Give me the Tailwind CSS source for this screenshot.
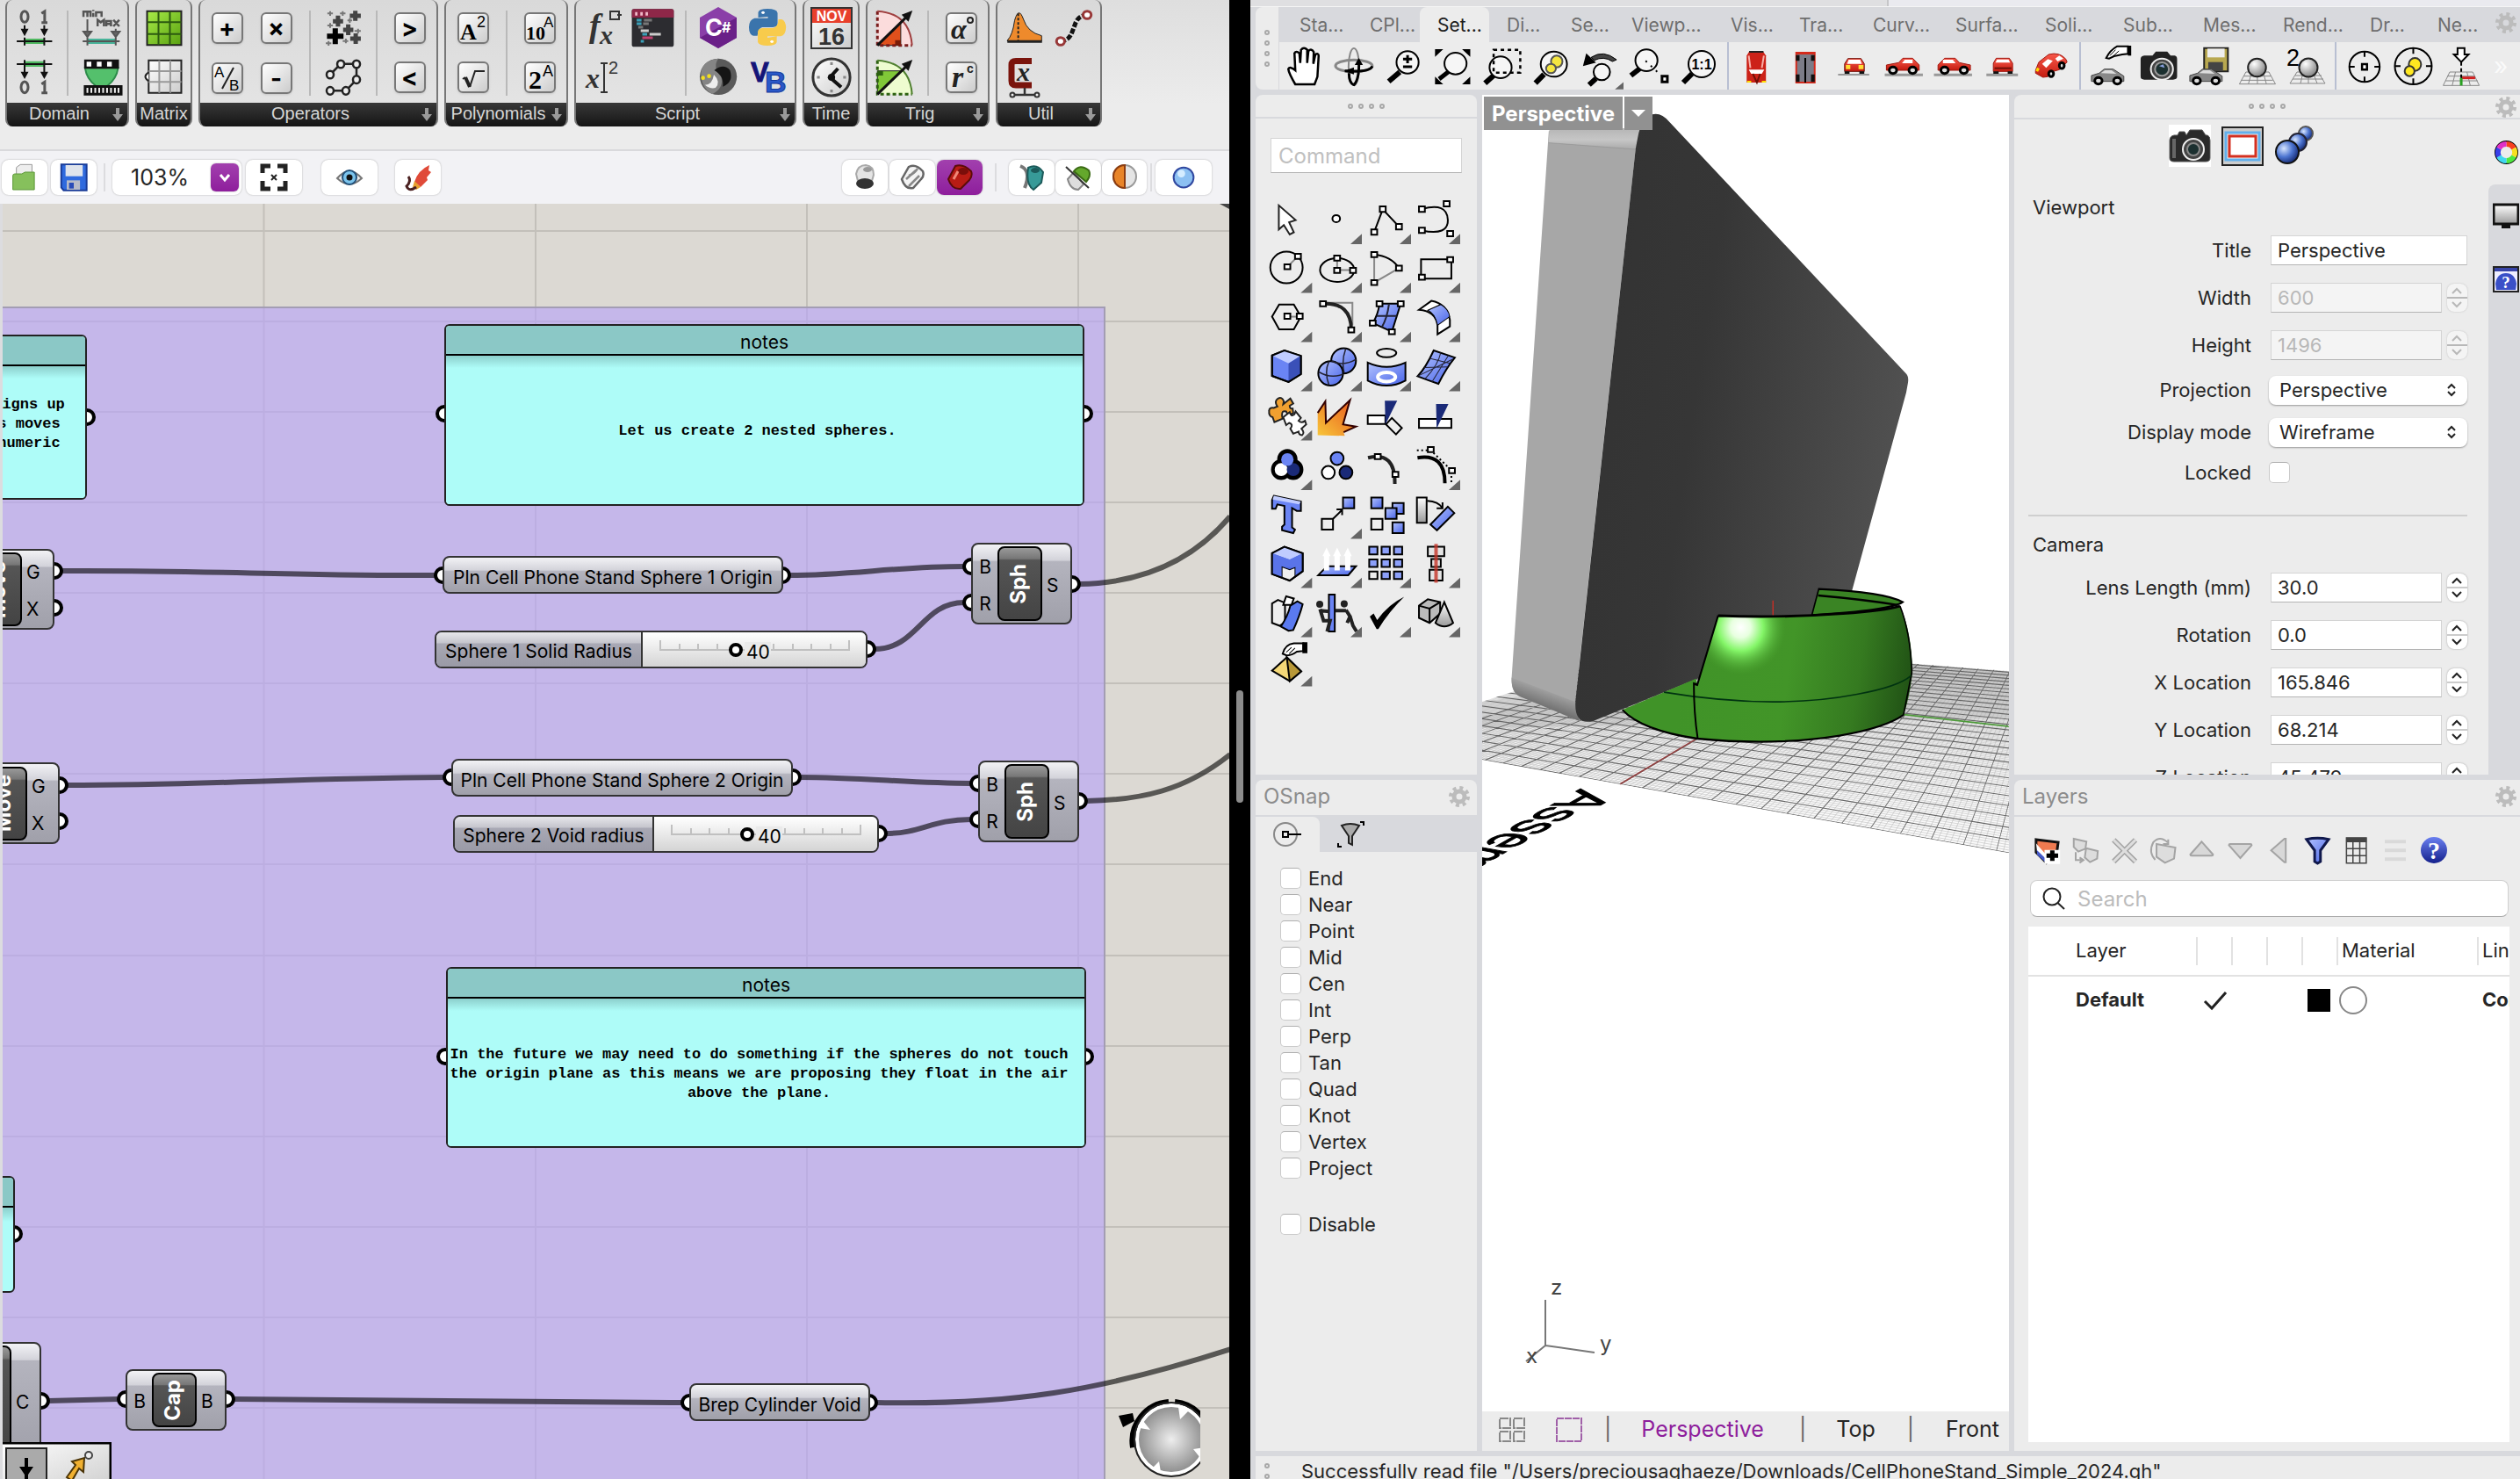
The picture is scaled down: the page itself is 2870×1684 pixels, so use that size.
<!DOCTYPE html>
<html lang="en">
<head>
<meta charset="utf-8">
<title>Grasshopper and Rhino workspace</title>
<script src="https://cdn.jsdelivr.net/npm/@tailwindcss/browser@4"></script>
</head>
<body class="bg-black font-['Inter',sans-serif] text-[#262626]">
<svg width="0" height="0" class="absolute">
  <defs>
    <path id="corner" d="M-39 0L0-29V0z" fill="#666"/>
    <path id="drop" d="M5 0h4v7h4l-6 8-6-8h4z" fill="#9a9a9a"/>
    <g id="gear" fill="none" stroke="#bcbcbc"><circle cx="12" cy="12" r="6" stroke-width="5"/><circle cx="12" cy="12" r="10" stroke-width="4" stroke-dasharray="3.93 3.93"/></g>
    <linearGradient id="blue" x1="0" y1="0" x2="1" y2="1"><stop offset="0" stop-color="#b4c4ff"/><stop offset="1" stop-color="#4763e8"/></linearGradient>
    <linearGradient id="gray" x1="0" y1="0" x2="0" y2="1"><stop offset="0" stop-color="#fff"/><stop offset="1" stop-color="#999"/></linearGradient>
    <linearGradient id="silver" x1="0" y1="0" x2="1" y2="1"><stop offset="0" stop-color="#fff"/><stop offset="1" stop-color="#ccc"/></linearGradient>
    <linearGradient id="fire" x1="0" y1="1" x2="1" y2="0"><stop offset="0" stop-color="#f8c63a"/><stop offset="1" stop-color="#e8541c"/></linearGradient>
    <linearGradient id="red" x1="0" y1="0" x2="0" y2="1"><stop offset="0" stop-color="#f8584a"/><stop offset="1" stop-color="#c41c10"/></linearGradient>
    <linearGradient id="lime" x1="0" y1="0" x2="1" y2="1"><stop offset="0" stop-color="#a8ec48"/><stop offset="1" stop-color="#58a010"/></linearGradient>
    <radialGradient id="ball" cx=".35" cy=".3" r=".8"><stop offset="0" stop-color="#fff"/><stop offset="1" stop-color="#777"/></radialGradient>
    <radialGradient id="blueball" cx=".35" cy=".35" r=".75"><stop offset="0" stop-color="#d8e6ff"/><stop offset=".5" stop-color="#4c74d0"/><stop offset="1" stop-color="#0c1c60"/></radialGradient>
    <linearGradient id="help" x1="0" y1="0" x2="0" y2="1"><stop offset="0" stop-color="#6a80f0"/><stop offset="1" stop-color="#14208c"/></linearGradient>
  </defs>
</svg>

<div class="grid h-screen grid-cols-[1400fr_24px_1446fr] overflow-hidden">

<!-- Grasshopper -->
<section class="flex min-w-0 flex-col overflow-hidden bg-[#ececec]">
  <div class="flex h-[172px] shrink-0 items-start gap-[7px] border-b-2 border-[#d9d9dc] bg-[linear-gradient(#dedede,#ececec_70%)] pl-[6px] [&_svg]:size-14 [&_svg]:overflow-visible [&_svg_*]:[vector-effect:non-scaling-stroke]">

    <div class="flex h-36 w-[141px] flex-col overflow-hidden rounded-lg border-x-2 border-[#777] bg-[linear-gradient(#d9d9d9,#e6e6e6)]">
      <div class="flex h-[117px] justify-center pt-1">
        <div>
          <svg viewBox="22 12 125 168" preserveAspectRatio="none" fill="none" stroke="#111" stroke-width="2"><path d="M60 132H110V150H60z" fill="#4fb860" stroke="none"/><path d="M40 141H130M60 128V155M110 128V155M60 86V116M110 86V116"/><path d="M50 98H70L60 124zM100 98H120L110 124z" fill="#111" stroke="none"/><ellipse cx="60" cy="57" rx="9" ry="19" stroke="#555" stroke-width="3"/><path d="M103 46L111 39V77M103 77H118" stroke="#555" stroke-width="3"/></svg>
          <svg viewBox="22 180 125 168" preserveAspectRatio="none" fill="none" stroke="#111" stroke-width="2"><path d="M60 209H110V228H60z" fill="#4fb860" stroke="none"/><path d="M40 219H130M60 205V250M110 205V250"/><path d="M50 245H70L60 270zM100 245H120L110 270z" fill="#111" stroke="none"/><ellipse cx="60" cy="298" rx="9" ry="19" stroke="#555" stroke-width="3"/><path d="M103 287L111 280V317M103 317H118" stroke="#555" stroke-width="3"/></svg>
        </div>
        <div class="mx-[9px] my-2 w-[2px] bg-[#b9b9b9]"></div>
        <div>
          <svg viewBox="190 12 125 168" preserveAspectRatio="none" fill="none" stroke="#555" stroke-width="2"><path d="M218 132H290V150H218z" fill="#48b49a" stroke="none"/><path d="M206 141H300M218 128V155M290 128V155M218 66V112M290 98V112"/><path d="M208 108H228L218 126zM280 108H300L290 126z" fill="#666"/><path d="M208 58V40H218V58M218 40H226V58M233 44V58M233 34V38M240 58V42H254V58" stroke-width="2.500"/><path d="M244 90V68L252 76L260 68V90M266 90V72H278V90M266 82H278M284 68L299 90M299 68L284 90" stroke-width="2.500"/></svg>
          <svg viewBox="190 180 125 168" preserveAspectRatio="none" stroke="#111" stroke-width="2"><path d="M212 232H296Q292 270 268 294H240Q216 270 212 232z" fill="#54c06c" stroke="#2d8c4a"/><path d="M212 206H296V232H212z" fill="#111"/><path d="M216 211H228V227H216zM242 211H254V227H242zM268 211H280V227H268z" fill="#fff" stroke="none"/><path d="M211 294H305V323H211z" fill="#111"/><path d="M218 300V317M228 300V317M238 300V317M248 300V317M258 300V317M268 300V317M278 300V317M288 300V317M297 300V317" stroke="#eee"/></svg>
        </div>
      </div>
      <div class="flex h-[27px] items-center bg-[linear-gradient(#383838,#151515)] pr-1 font-['Liberation_Sans',sans-serif] text-[20px] leading-[22px] text-[#d6d6d6]"><span class="flex-1 pb-1 text-center">Domain</span><svg class="!h-[15px] !w-[14px]" viewBox="0 0 14 15"><use href="#drop"/></svg></div>
    </div>

    <div class="flex h-36 w-[65px] flex-col overflow-hidden rounded-lg border-x-2 border-[#777] bg-[linear-gradient(#d9d9d9,#e6e6e6)]">
      <div class="flex h-[117px] justify-center pt-1"><div>
          <svg viewBox="354 12 125 168" preserveAspectRatio="none"><path d="M373 38H460V154H373z" fill="url(#lime)" stroke="#222" stroke-width="2"/><path d="M402 38V154M431 38V154M373 76H460M373 116H460" stroke="#2c5a10" stroke-width="2"/></svg>
          <svg viewBox="354 180 125 168" preserveAspectRatio="none"><path d="M377 206H460V317H377z" fill="url(#silver)" stroke="#222" stroke-width="2"/><path d="M404 206V317M432 206V317M377 243H460M377 280H460" stroke="#999" stroke-width="2"/><path d="M377 247Q360 262 377 277" fill="#fff" stroke="#222" stroke-width="2"/></svg>
      </div></div>
      <div class="flex h-[27px] items-center justify-center bg-[linear-gradient(#383838,#151515)] pb-1 font-['Liberation_Sans',sans-serif] text-[20px] leading-[22px] text-[#d6d6d6]">Matrix</div>
    </div>

    <div class="flex h-36 w-[273px] flex-col overflow-hidden rounded-lg border-x-2 border-[#777] bg-[linear-gradient(#d9d9d9,#e6e6e6)]">
      <div class="flex h-[117px] justify-center pt-1">
        <div class="grid grid-cols-2 place-items-center [&>span]:m-[10px] [&>span]:flex [&>span]:size-9 [&>span]:items-center [&>span]:justify-center [&>span]:rounded-md [&>span]:border-2 [&>span]:border-[#777] [&>span]:bg-[linear-gradient(135deg,#fff,#ccc)] [&>span]:text-[28px] [&>span]:font-bold [&>span]:text-black [&>span]:shadow">
          <span>+</span><span>×</span><span><svg class="!size-8 shrink-0" viewBox="0 0 32 32"><text x="1" y="15" font-size="17" font-family="Liberation Sans" font-weight="normal">A</text><text x="18" y="30" font-size="17" font-family="Liberation Sans" font-weight="normal">B</text><path d="M23 4L10 28" stroke="#222" stroke-width="2"/></svg></span><span>-</span>
        </div>
        <div class="mx-[9px] my-2 w-[2px] bg-[#b9b9b9]"></div>
        <div>
          <svg viewBox="811 12 125 168" preserveAspectRatio="none" stroke="#333" fill="none"><path d="M832 124H874M853 97V151" stroke="#000" stroke-width="6"/><path d="M847 73H873M860 53V91M890 54H918M904 37V71M873 102H899M886 83V120M891 132H918M905 114V150" stroke="#444" stroke-width="5"/><path d="M833 46H847M840 38V54M865 46H879M872 38V54M833 87H847M840 79V95M902 106H918M911 98V114M872 140H886M880 132V148M829 148H843M836 140V156M884 70H896M890 62V78" stroke="#777" stroke-width="2"/></svg>
          <svg viewBox="811 180 125 168" preserveAspectRatio="none" stroke="#222" stroke-width="2.500" fill="#eee"><path d="M867 218H907L907 272L880 310H840M840 255L867 218" fill="none"/><ellipse cx="867" cy="219" rx="9" ry="13"/><ellipse cx="907" cy="219" rx="9" ry="13"/><ellipse cx="907" cy="272" rx="9" ry="13"/><ellipse cx="880" cy="310" rx="9" ry="13"/><ellipse cx="840" cy="310" rx="9" ry="13"/><ellipse cx="840" cy="255" rx="9" ry="13"/></svg>
        </div>
        <div class="mx-[9px] my-2 w-[2px] bg-[#b9b9b9]"></div>
        <div class="[&>span]:m-[10px] [&>span]:mb-5 [&>span]:flex [&>span]:size-9 [&>span]:items-center [&>span]:justify-center [&>span]:rounded-md [&>span]:border-2 [&>span]:border-[#777] [&>span]:bg-[linear-gradient(135deg,#fff,#ccc)] [&>span]:text-[28px] [&>span]:font-bold [&>span]:text-black [&>span]:shadow"><span>&gt;</span><span>&lt;</span></div>
      </div>
      <div class="flex h-[27px] items-center bg-[linear-gradient(#383838,#151515)] pr-1 font-['Liberation_Sans',sans-serif] text-[20px] leading-[22px] text-[#d6d6d6]"><span class="flex-1 pb-1 text-center">Operators</span><svg class="!h-[15px] !w-[14px]" viewBox="0 0 14 15"><use href="#drop"/></svg></div>
    </div>

    <div class="flex h-36 w-[141px] flex-col overflow-hidden rounded-lg border-x-2 border-[#777] bg-[linear-gradient(#d9d9d9,#e6e6e6)]">
      <div class="flex h-[117px] justify-center pt-1 [&_span]:m-[10px] [&_span]:mb-5 [&_span]:flex [&_span]:size-9 [&_span]:items-center [&_span]:justify-center [&_span]:rounded-md [&_span]:border-2 [&_span]:border-[#777] [&_span]:bg-[linear-gradient(135deg,#fff,#ccc)] [&_span]:text-[#222] [&_span]:shadow [&_svg]:shrink-0">
        <div><span><svg class="!size-8" viewBox="0 0 32 32"><text x="1" y="29" font-size="26" font-weight="bold" font-family="Liberation Serif">A</text><text x="20" y="15" font-size="18" font-family="Liberation Sans">2</text></svg></span><span><svg class="!size-8" viewBox="0 0 32 32" fill="none" stroke="#222"><path d="M4 18l3-2" stroke-width="2"/><path d="M7 16l5 11" stroke-width="4"/><path d="M12 27L18 9H29" stroke-width="2"/></svg></span></div>
        <div class="mx-[9px] my-2 w-[2px] bg-[#b9b9b9]"></div>
        <div><span><svg class="!size-8" viewBox="0 0 32 32"><text x="0" y="29" font-size="22" font-weight="bold" font-family="Liberation Serif">10</text><text x="20" y="15" font-size="17" font-family="Liberation Sans">A</text></svg></span><span><svg class="!size-8" viewBox="0 0 32 32"><text x="3" y="29" font-size="30" font-weight="bold" font-family="Liberation Serif">2</text><text x="19" y="15" font-size="18" font-family="Liberation Sans">A</text></svg></span></div>
      </div>
      <div class="flex h-[27px] items-center bg-[linear-gradient(#383838,#151515)] pr-1 font-['Liberation_Sans',sans-serif] text-[20px] leading-[22px] text-[#d6d6d6]"><span class="flex-1 pb-1 text-center">Polynomials</span><svg class="!h-[15px] !w-[14px]" viewBox="0 0 14 15"><use href="#drop"/></svg></div>
    </div>

    <div class="flex h-36 w-[253px] flex-col overflow-hidden rounded-lg border-x-2 border-[#777] bg-[linear-gradient(#d9d9d9,#e6e6e6)]">
      <div class="flex h-[117px] justify-center pt-1">
        <div>
          <svg viewBox="0 0 56 56"><text x="12" y="38" font-family="Liberation Serif" font-style="italic" font-weight="bold" font-size="38" fill="#333">f</text><text x="24" y="46" font-family="Liberation Serif" font-style="italic" font-weight="bold" font-size="30" fill="#333">x</text><path d="M36 9h10v9h-10zM44 13h5" fill="none" stroke="#333" stroke-width="2"/></svg>
          <svg viewBox="0 0 56 56"><text x="8" y="40" font-family="Liberation Serif" font-style="italic" font-weight="bold" font-size="32" fill="#333">x</text><path d="M25 12h8M29 12v33M25 45h8" stroke="#333" stroke-width="2"/><text x="34" y="24" font-family="Liberation Sans" font-size="20" fill="#333">2</text></svg>
        </div>
        <div>
          <svg viewBox="30 12 122 168" preserveAspectRatio="none"><path d="M40 38Q40 31 46 31H138Q144 31 144 38V153Q144 160 138 160H46Q40 160 40 153z" fill="#2c2c30"/><path d="M40 60V38Q40 31 46 31H138Q144 31 144 38V60z" fill="#8e2748"/><path d="M48 47H54M61 47H67M74 47H80" stroke="#f0b8c8" stroke-width="4"/><path d="M52 69H64M52 81H64M66 117H78M62 141H70" stroke="#3aa0b8" stroke-width="3"/><path d="M70 69H90M68 81H82M56 93H68" stroke="#777" stroke-width="3"/><path d="M62 105H82M84 117H112" stroke="#ccc" stroke-width="3"/><path d="M66 129H92" stroke="#c04070" stroke-width="3"/></svg>
        </div>
        <div class="mx-[9px] my-2 w-[2px] bg-[#b9b9b9]"></div>
        <div>
          <svg viewBox="0 0 56 56"><path d="M27 4L48 16V39L27 51L6 39V16z" fill="#8a3fa8"/><path d="M48 16V39L27 51L6 39z" fill="#6a2088"/><text x="12" y="37" font-size="27" font-family="Inter" font-weight="bold" fill="#fff">C</text><text x="31" y="33" font-size="16" font-family="Inter" font-weight="bold" fill="#fff">#</text></svg>
          <svg viewBox="196 180 122 168" preserveAspectRatio="none"><ellipse cx="255" cy="262" rx="46" ry="62" fill="#5a5a5a"/><path d="M212 250Q215 205 255 200Q240 230 262 262Q270 300 240 322Q212 300 212 250" fill="#858585"/><path d="M245 240Q268 215 284 240Q294 280 266 296Q270 260 245 240" fill="#151515"/><path d="M222 290Q240 290 244 255Q262 280 248 300Q235 305 222 290" fill="#eee"/><ellipse cx="217" cy="266" rx="5" ry="7" fill="#f2de20"/><ellipse cx="232" cy="260" rx="5" ry="7" fill="#f2de20"/></svg>
        </div>
        <div>
          <svg viewBox="318 12 122 168" preserveAspectRatio="none"><path d="M354 60V42Q356 30 377 30Q400 30 402 44V82Q402 92 390 93H364Q354 96 352 122H342Q331 118 331 92Q332 66 345 62H378V57z" fill="#3a74ac"/><path d="M400 124V144Q398 156 377 156Q356 156 353 144V108Q354 98 364 96H390Q404 92 404 66H412Q422 70 423 94Q422 122 410 124H377V129z" fill="#f8cb4c"/><ellipse cx="366" cy="43" rx="4" ry="5" fill="#fff"/><ellipse cx="388" cy="142" rx="4" ry="5" fill="#fff"/></svg>
          <svg viewBox="0 0 56 56"><text x="8" y="33" font-size="31" font-family="Liberation Sans" font-weight="bold" fill="#141478" stroke="#141478">V</text><text x="24" y="45" font-size="34" font-family="Liberation Sans" font-weight="bold" fill="#2a58c8" stroke="#14389a">B</text></svg>
        </div>
      </div>
      <div class="flex h-[27px] items-center bg-[linear-gradient(#383838,#151515)] pr-1 font-['Liberation_Sans',sans-serif] text-[20px] leading-[22px] text-[#d6d6d6]"><span class="flex-1 pb-1 text-center">Script</span><svg class="!h-[15px] !w-[14px]" viewBox="0 0 14 15"><use href="#drop"/></svg></div>
    </div>

    <div class="flex h-36 w-[65px] flex-col overflow-hidden rounded-lg border-x-2 border-[#777] bg-[linear-gradient(#d9d9d9,#e6e6e6)]">
      <div class="flex h-[117px] justify-center pt-1"><div>
          <svg viewBox="0 0 56 56"><path d="M5 5h46v46h-46z" fill="url(#silver)"/><path d="M5 5h46v17h-46z" fill="#e8402c"/><path d="M5 5h46v46h-46z" fill="none" stroke="#333" stroke-width="2"/><text x="28" y="20" font-size="16" font-weight="bold" text-anchor="middle" font-family="Liberation Sans" fill="#fff">NOV</text><text x="28" y="47" font-size="27" font-weight="bold" text-anchor="middle" font-family="Liberation Sans" fill="#333">16</text></svg>
          <svg viewBox="475 180 122 168" preserveAspectRatio="none"><ellipse cx="536" cy="264" rx="46" ry="63" fill="url(#silver)" stroke="#333" stroke-width="3"/><path d="M536 212V222M536 306V316M500 264H507M565 264H572" stroke="#888" stroke-width="3"/><path d="M552 234L532 264L560 298" fill="none" stroke="#111" stroke-width="4"/><ellipse cx="536" cy="264" rx="9" ry="12" fill="#111"/></svg>
      </div></div>
      <div class="flex h-[27px] items-center justify-center bg-[linear-gradient(#383838,#151515)] pb-1 font-['Liberation_Sans',sans-serif] text-[20px] leading-[22px] text-[#d6d6d6]">Time</div>
    </div>

    <div class="flex h-36 w-[141px] flex-col overflow-hidden rounded-lg border-x-2 border-[#777] bg-[linear-gradient(#d9d9d9,#e6e6e6)]">
      <div class="flex h-[117px] justify-center pt-1">
        <div>
          <svg viewBox="632 12 122 168" preserveAspectRatio="none"><path d="M650 38Q730 45 736 155H650z" fill="#fbdcdc"/><path d="M650 155L708 80V155z" fill="#e0501c" stroke="#222" stroke-width="1"/><path d="M650 38V155H736" fill="none" stroke="#7a1c1c" stroke-width="3" stroke-dasharray="4 3"/><path d="M650 38Q730 45 736 155" fill="none" stroke="#a04040" stroke-width="2"/><path d="M694 137H708V155H694z" fill="#7a1c08"/><path d="M650 155L722 58" stroke="#111" stroke-width="3"/><path d="M737 36L710 50L727 74z" fill="#111"/></svg>
          <svg viewBox="632 180 122 168" preserveAspectRatio="none"><path d="M650 206Q730 213 736 322H650z" fill="#eefcd0"/><path d="M650 242H708L650 320z" fill="#80c838" stroke="#222" stroke-width="1"/><path d="M650 206V322H736" fill="none" stroke="#2c6010" stroke-width="3" stroke-dasharray="4 3"/><path d="M650 206Q730 213 736 322" fill="none" stroke="#508030" stroke-width="2"/><path d="M650 242H664V258H650z" fill="#2c6010"/><path d="M650 322L722 226" stroke="#111" stroke-width="3"/><path d="M737 204L710 218L727 242z" fill="#111"/></svg>
        </div>
        <div class="mx-[9px] my-2 w-[2px] bg-[#b9b9b9]"></div>
        <div class="[&>span]:m-[10px] [&>span]:mb-5 [&>span]:flex [&>span]:size-9 [&>span]:items-center [&>span]:justify-center [&>span]:rounded-md [&>span]:border-2 [&>span]:border-[#777] [&>span]:bg-[linear-gradient(135deg,#fff,#ccc)] [&>span]:shadow [&_svg]:shrink-0"><span><svg class="!size-8" viewBox="0 0 32 32"><text x="4" y="28" font-size="32" font-style="italic" font-weight="bold" font-family="Liberation Serif" fill="#222">α</text><circle cx="26" cy="7" r="3" fill="none" stroke="#222" stroke-width="2"/></svg></span><span><svg class="!size-8" viewBox="0 0 32 32"><text x="5" y="27" font-size="34" font-style="italic" font-weight="bold" font-family="Liberation Serif" fill="#222">r</text><text x="22" y="11" font-size="14" font-weight="bold" font-family="Liberation Sans" fill="#222">c</text></svg></span></div>
      </div>
      <div class="flex h-[27px] items-center bg-[linear-gradient(#383838,#151515)] pr-1 font-['Liberation_Sans',sans-serif] text-[20px] leading-[22px] text-[#d6d6d6]"><span class="flex-1 pb-1 text-center">Trig</span><svg class="!h-[15px] !w-[14px]" viewBox="0 0 14 15"><use href="#drop"/></svg></div>
    </div>

    <div class="flex h-36 w-[121px] flex-col overflow-hidden rounded-lg border-x-2 border-[#777] bg-[linear-gradient(#d9d9d9,#e6e6e6)]">
      <div class="flex h-[117px] justify-center pt-1">
        <div>
          <svg viewBox="954 12 122 168" preserveAspectRatio="none"><path d="M972 138Q985 120 990 70Q1000 20 1012 66Q1022 110 1057 122V140H972z" fill="#ee8a2c" stroke="#222" stroke-width="1"/><path d="M972 142H1058" stroke="#222" stroke-width="3"/><path d="M999 46V138" stroke="#222" stroke-width="2" stroke-dasharray="3 2"/></svg>
          <svg viewBox="0 0 56 56"><path d="M36 9.500H18Q13 9.500 13 14V32Q13 37 18 37H36" fill="none" stroke="#7a140c" stroke-width="7"/><text x="19" y="32" font-family="Liberation Serif" font-style="italic" font-weight="bold" font-size="30" fill="#222">x</text><path d="M28 40V48M15 48H41" stroke="#333" stroke-width="2.500"/><circle cx="14" cy="48" r="2.500" fill="#eee" stroke="#333" stroke-width="2"/><circle cx="42" cy="48" r="2.500" fill="#eee" stroke="#333" stroke-width="2"/></svg>
        </div>
        <div>
          <svg viewBox="1076 12 122 168" preserveAspectRatio="none"><path d="M1104 140Q1124 140 1132 112L1142 76Q1150 52 1170 51" fill="none" stroke="#111" stroke-width="5" stroke-dasharray="6 2"/><ellipse cx="1104" cy="141" rx="10" ry="13" fill="#fff" stroke="#983838" stroke-width="3"/><ellipse cx="1170" cy="51" rx="10" ry="13" fill="#fff" stroke="#983838" stroke-width="3"/></svg>
        </div>
      </div>
      <div class="flex h-[27px] items-center bg-[linear-gradient(#383838,#151515)] pr-1 font-['Liberation_Sans',sans-serif] text-[20px] leading-[22px] text-[#d6d6d6]"><span class="flex-1 pb-1 text-center">Util</span><svg class="!h-[15px] !w-[14px]" viewBox="0 0 14 15"><use href="#drop"/></svg></div>
    </div>
  </div>

  <!-- canvas toolbar -->
  <div class="flex h-[60px] shrink-0 items-center bg-[#f2f2f5] pl-[2px] pr-5 [&_button]:flex [&_button]:h-10 [&_button]:items-center [&_button]:justify-center [&_button]:rounded-lg [&_button]:shadow-[0_0_2px_#aaa] [&_svg_*]:[vector-effect:non-scaling-stroke]">
    <button class="w-[52px] bg-white" aria-label="Open"><svg class="size-10" viewBox="18 546 90 120" preserveAspectRatio="none"><path d="M42 595V572L52 562H82V600H42z" fill="#eee" stroke="#999"/><path d="M33 600Q33 594 38 594H56L64 588H88V648H33z" fill="#86c05c" stroke="#5c9838"/></svg></button>
    <button class="ml-1 w-[52px] bg-white" aria-label="Save"><svg class="size-10" viewBox="143 546 90 120" preserveAspectRatio="none"><path d="M156 562H221V650H162L156 640z" fill="#2f6ade" stroke="#1a3c98" stroke-width="2"/><path d="M167 564H211V602H167z" fill="#dfe4ec"/><path d="M170 616H204V648H170z" fill="#b8bcc8"/><path d="M176 624H188V644H176z" fill="#2a4cb8"/></svg></button>
    <div class="mx-2 h-8 w-[2px] bg-[#dcdcdf]"></div>
    <div class="flex h-10 w-[147px] items-center justify-between rounded-lg bg-white pl-[21px] pr-[3px] shadow-[0_0_2px_#aaa]"><span class="pt-[2px] text-[25px]">103%</span>
      <button class="!h-8 w-8 !rounded-md bg-[linear-gradient(#a240ae,#8e1e9c)]" aria-label="Zoom level"><svg class="size-4" viewBox="0 0 16 16"><path d="M3 5l5 6 5-6" fill="none" stroke="#fff" stroke-width="3"/></svg></button></div>
    <button class="ml-[5px] w-16 bg-white" aria-label="Zoom extents"><svg class="size-8" viewBox="0 0 32 32"><path d="M3 11V3h9M20 3h9v8M29 20v9h-9M12 29H3v-9" fill="none" stroke="#222" stroke-width="5"/><path d="M13 13l6 6M19 13l-6 6" stroke="#222" stroke-width="2"/></svg></button>
    <button class="ml-[22px] w-16 bg-white" aria-label="Named views"><svg class="h-7 w-8" viewBox="0 0 32 28"><path d="M2 15Q16-1 30 15Q16 28 2 15z" fill="#eee" stroke="#777" stroke-width="2"/><circle cx="16" cy="14" r="8" fill="#7cc4ec" stroke="#235078" stroke-width="2"/><circle cx="16" cy="14" r="3.500" fill="#111"/></svg></button>
    <button class="ml-5 w-[52px] bg-white" aria-label="Sketch"><svg class="size-8" viewBox="0 0 32 32"><path d="M12 21Q16 8 29 2L28 8L31 10L26 16L27 19L19 27z" fill="#e04a38"/><path d="M19 27L12 20L10 27L14 30z" fill="#e8a030"/><path d="M14 27Q6 33 3 26Q9 20 5 15" fill="none" stroke="#4a2020" stroke-width="3"/></svg></button>
    <div class="flex-1"></div>
    <button class="w-[52px] bg-white" aria-label="No preview"><svg class="size-8" viewBox="0 0 32 32"><path d="M6 12Q8 2 17 2Q26 3 26 13L24 20H8z" fill="#e4e4e4" stroke="#aaa" stroke-width="2"/><ellipse cx="19" cy="7" rx="5" ry="3" fill="#999"/><ellipse cx="16" cy="23" rx="10" ry="6" fill="#333"/></svg></button>
    <button class="ml-[2px] w-[52px] bg-white" aria-label="Wireframe preview"><svg class="size-8" viewBox="0 0 32 32"><path d="M4 18L12 4Q20 0 28 9Q30 14 26 18L17 28Q8 30 4 18z" fill="#f4f4f4" stroke="#666" stroke-width="2.500"/><path d="M12 14Q18 12 22 6M9 18L20 8M12 26L24 14" fill="none" stroke="#888" stroke-width="2.500"/></svg></button>
    <button class="ml-[2px] w-[52px] bg-[linear-gradient(#a240ae,#8e1e9c)]" aria-label="Shaded preview"><svg class="size-8" viewBox="0 0 32 32"><path d="M3 18L11 3Q20 0 29 9Q31 14 27 19L17 29Q7 30 3 18z" fill="#b81c14" stroke="#5a0c08" stroke-width="2"/><ellipse cx="20" cy="9" rx="6" ry="4" fill="#7a0e0a"/><path d="M9 18L14 9" stroke="#f08878" stroke-width="3"/></svg></button>
    <div class="mx-[14px] h-8 w-[2px] bg-[#dcdcdf]"></div>
    <button class="w-[52px] bg-white" aria-label="Selected preview"><svg class="size-8" viewBox="0 0 32 32"><path d="M3 3Q16 8 8 28" stroke="#777" stroke-width="4" fill="none"/><path d="M12 5Q22 0 29 10L27 22L18 30Q9 24 12 5z" fill="#379a98" stroke="#1c5a5a" stroke-width="2"/><ellipse cx="20" cy="8" rx="5" ry="3" fill="#1c5a5a"/></svg></button>
    <button class="ml-px w-[52px] bg-white" aria-label="Clipped preview"><svg class="size-8" viewBox="0 0 32 32"><path d="M4 18L11 10L22 24L16 30Q7 30 4 18z" fill="#ddd" stroke="#888" stroke-width="2"/><path d="M11 9Q18 0 28 8Q31 14 25 21z" fill="#64a82c" stroke="#3a6a14" stroke-width="2"/><path d="M2 4L28 28" stroke="#333" stroke-width="2"/></svg></button>
    <button class="ml-px w-[51px] bg-white" aria-label="Preview settings"><svg class="size-8" viewBox="0 0 32 32"><ellipse cx="16" cy="15" rx="13" ry="13" fill="#e4e4e4" stroke="#999" stroke-width="2"/><path d="M16 2A13 13 0 0 0 16 28z" fill="#e88428" stroke="#8c3c10" stroke-width="2"/></svg></button>
    <div class="mx-1 h-8 w-[2px] bg-[#dcdcdf]"></div>
    <button class="w-16 bg-white" aria-label="Mesh quality"><svg class="size-7" viewBox="0 0 32 32"><circle cx="16" cy="16" r="13" fill="#8cc0f2" stroke="#3048a0" stroke-width="2"/><circle cx="13" cy="11" r="5" fill="#d4ecff"/></svg></button>
  </div>

  <!-- node canvas -->
  <div class="relative min-h-0 flex-1 overflow-hidden border-l-[3px] border-[#dcdcdf] bg-[#dcd9d3] text-[21px] text-black">
    <svg class="absolute left-0 top-0" width="1397" height="1452" viewBox="3 232 1397 1452"><path d="M300.500 232V1684M610 232V1684M919 232V1684M1228 232V1684M0 263H1400M0 366H1400M0 469H1400M0 572H1400M0 675H1400M0 778H1400M0 881H1400M0 984H1400M0 1088H1400M0 1191H1400M0 1294H1400M0 1397H1400M0 1500H1400M0 1603H1400" stroke="#c3c0ba" stroke-width="2"/><path d="M1389 232H1400V238z" fill="#444"/></svg>
    <div class="absolute bottom-0 left-0 top-[117px] w-[1256px] border-r-2 border-t-2 border-[#a39db3] bg-[#b9a5f6]/65"></div>
    <svg class="absolute left-0 top-0" width="1397" height="1452" viewBox="3 232 1397 1452" fill="none">
      <g stroke="#000" stroke-opacity=".6" stroke-width="6">
        <path d="M70 650C240 649 330 656 496 655M76 894C240 894 330 886 506 885M899 655C970 655 1020 645 1098 645M996 739C1045 739 1050 686 1098 686M911 885C980 885 1040 892 1106 892M1009 949C1050 949 1060 933 1106 933M1229 665C1300 664 1357 640 1401 588M1237 912C1300 911 1350 900 1401 859M55 1595L135 1593M266 1593C430 1593 600 1597 777 1597M998 1597C1150 1600 1250 1585 1402 1536"/>
      </g>
      <g fill="#fff" stroke="#000" stroke-width="4">
        <circle cx="99" cy="475" r="8"/><circle cx="506" cy="471" r="8"/><circle cx="1235" cy="471" r="8"/>
        <circle cx="507" cy="1203" r="8"/><circle cx="1236" cy="1203" r="8"/><circle cx="16" cy="1405" r="8"/>
        <circle cx="62" cy="650" r="8"/><circle cx="62" cy="692" r="8"/><circle cx="68" cy="894" r="8"/><circle cx="68" cy="935" r="8"/>
        <circle cx="504" cy="655" r="8"/><circle cx="891" cy="655" r="8"/><circle cx="514" cy="885" r="8"/><circle cx="903" cy="885" r="8"/>
        <circle cx="988" cy="739" r="8"/><circle cx="1001" cy="949" r="8"/>
        <circle cx="1106" cy="645" r="8"/><circle cx="1106" cy="686" r="8"/><circle cx="1221" cy="665" r="8"/>
        <circle cx="1114" cy="892" r="8"/><circle cx="1114" cy="933" r="8"/><circle cx="1229" cy="912" r="8"/>
        <circle cx="47" cy="1595" r="8"/><circle cx="143" cy="1593" r="8"/><circle cx="258" cy="1593" r="8"/><circle cx="785" cy="1597" r="8"/><circle cx="990" cy="1597" r="8"/>
      </g>
    </svg>

    <!-- note panels -->
    <div class="absolute left-[-160px] top-[149px] flex h-[188px] w-[256px] flex-col overflow-hidden rounded-md border-2 border-[#222] bg-[#aefcf8]">
      <div class="h-[34px] shrink-0 border-b-2 border-black bg-[#8bc8c6]"></div>
      <div class="flex-1 bg-[linear-gradient(#8ccfcc,#aefcf8_14px)] pl-[124px] pt-[33px] text-center font-['Liberation_Mono',monospace] text-[17px] font-bold leading-[22px]"><p>signs up</p><p>s moves</p><p>numeric</p></div>
    </div>
    <div class="absolute left-[503px] top-[137px] flex h-[207px] w-[729px] flex-col overflow-hidden rounded-md border-2 border-[#222] bg-[#aefcf8]">
      <div class="h-[34px] shrink-0 border-b-2 border-black bg-[#8bc8c6] pt-[3px] text-center leading-[32px]">notes</div>
      <div class="flex flex-1 items-center justify-center bg-[linear-gradient(#8ccfcc,#aefcf8_14px)] pr-4 pt-[3px] text-center font-['Liberation_Mono',monospace] text-[17px] font-bold leading-[22px]">Let us create 2 nested spheres.</div>
    </div>
    <div class="absolute left-[505px] top-[869px] flex h-[206px] w-[729px] flex-col overflow-hidden rounded-md border-2 border-[#222] bg-[#aefcf8]">
      <div class="h-[34px] shrink-0 border-b-2 border-black bg-[#8bc8c6] pt-[3px] text-center leading-[32px]">notes</div>
      <div class="flex flex-1 items-center justify-center bg-[linear-gradient(#8ccfcc,#aefcf8_14px)] pr-4 pt-[3px] text-center font-['Liberation_Mono',monospace] text-[17px] font-bold leading-[22px]"><p>In the future we may need to do something if the spheres do not touch<br>the origin plane as this means we are proposing they float in the air<br>above the plane.</p></div>
    </div>
    <div class="absolute left-[-160px] top-[1107px] h-[133px] w-[174px] overflow-hidden rounded-md border-2 border-[#222] bg-[#aefcf8]">
      <div class="h-[34px] border-b-2 border-black bg-[#8bc8c6]"></div><div class="h-4 bg-[linear-gradient(#8ccfcc,#aefcf8)]"></div>
    </div>

    <!-- components -->
    <div class="absolute left-[-56px] top-[393px] flex h-[92px] w-[115px] items-center rounded-lg border-2 border-[#333] bg-[linear-gradient(#f2f2f5_0%,#d3d3da_20%,#b4b4be_22%,#a0a0aa_100%)]">
      <div class="ml-[25px] flex h-[84px] w-[51px] items-center justify-center rounded-lg border-2 border-black bg-[linear-gradient(#999_0%,#777_15%,#555_17%,#444_100%)] pr-1 text-[24px] font-bold text-white"><span class="rotate-180 [writing-mode:vertical-rl]">Move</span></div>
      <div class="ml-[5px] flex h-full flex-col justify-around pt-1"><span>G</span><span>X</span></div>
    </div>
    <div class="absolute left-[-50px] top-[636px] flex h-[93px] w-[115px] items-center rounded-lg border-2 border-[#333] bg-[linear-gradient(#f2f2f5_0%,#d3d3da_20%,#b4b4be_22%,#a0a0aa_100%)]">
      <div class="ml-[25px] flex h-[84px] w-[51px] items-center justify-center rounded-lg border-2 border-black bg-[linear-gradient(#999_0%,#777_15%,#555_17%,#444_100%)] pr-1 text-[24px] font-bold text-white"><span class="rotate-180 [writing-mode:vertical-rl]">Move</span></div>
      <div class="ml-[5px] flex h-full flex-col justify-around pt-1"><span>G</span><span>X</span></div>
    </div>
    <div class="absolute left-[501px] top-[401px] flex h-[43px] w-[388px] items-center justify-center whitespace-nowrap rounded-lg border-2 border-[#333] bg-[linear-gradient(#f2f2f5_0%,#d3d3da_36%,#b4b4be_40%,#a0a0aa_100%)] pt-[6px]">Pln Cell Phone Stand Sphere 1 Origin</div>
    <div class="absolute left-[511px] top-[632px] flex h-[43px] w-[389px] items-center justify-center whitespace-nowrap rounded-lg border-2 border-[#333] bg-[linear-gradient(#f2f2f5_0%,#d3d3da_36%,#b4b4be_40%,#a0a0aa_100%)] pt-[6px]">Pln Cell Phone Stand Sphere 2 Origin</div>

    <div class="absolute left-[492px] top-[486px] flex h-[43px] w-[493px] overflow-hidden rounded-lg border-2 border-[#333]">
      <div class="flex w-[237px] items-center justify-center whitespace-nowrap border-r-2 border-[#333] bg-[linear-gradient(#e6e6ea_0%,#c6c6ce_30%,#a8a8b4_34%,#9a9aa6_100%)] pt-[5px]">Sphere 1 Solid Radius</div>
      <div class="flex flex-1 items-center bg-[linear-gradient(#fff,#d4d4d4)]"><svg class="h-10 w-[254px]" viewBox="732 719 254 40"><path d="M752 728V739H967V728M774 739V732M795 739V732M817 739V732M903 739V732M924 739V732M946 739V732M881 739V732" fill="none" stroke="#c0c0c0" stroke-width="2"/><circle cx="838" cy="739" r="6" fill="#fff" stroke="#000" stroke-width="4"/><path d="M848 730h30v14h-30z" fill="#eaeaea"/><text x="850" y="749" font-size="21" fill="#000">40</text></svg></div>
    </div>
    <div class="absolute left-[513px] top-[696px] flex h-[43px] w-[485px] overflow-hidden rounded-lg border-2 border-[#333]">
      <div class="flex w-[229px] items-center justify-center whitespace-nowrap border-r-2 border-[#333] bg-[linear-gradient(#e6e6ea_0%,#c6c6ce_30%,#a8a8b4_34%,#9a9aa6_100%)] pt-[5px]">Sphere 2 Void radius</div>
      <div class="flex flex-1 items-center bg-[linear-gradient(#fff,#d4d4d4)]"><svg class="h-10 w-[254px]" viewBox="732 719 254 40"><path d="M752 728V739H967V728M774 739V732M795 739V732M817 739V732M903 739V732M924 739V732M946 739V732M881 739V732" fill="none" stroke="#c0c0c0" stroke-width="2"/><circle cx="838" cy="739" r="6" fill="#fff" stroke="#000" stroke-width="4"/><path d="M848 730h30v14h-30z" fill="#eaeaea"/><text x="850" y="749" font-size="21" fill="#000">40</text></svg></div>
    </div>

    <div class="absolute left-[1103px] top-[386px] flex h-[93px] w-[115px] items-center rounded-lg border-2 border-[#333] bg-[linear-gradient(#f2f2f5_0%,#d3d3da_20%,#b4b4be_22%,#a0a0aa_100%)]">
      <div class="flex h-full w-7 flex-col items-center justify-around pt-1"><span>B</span><span>R</span></div>
      <div class="flex h-[85px] w-[51px] items-center justify-center rounded-lg border-2 border-black bg-[linear-gradient(#999_0%,#777_15%,#555_17%,#444_100%)] pr-1 text-[24px] font-bold text-white"><span class="rotate-180 [writing-mode:vertical-rl]">Sph</span></div>
      <span class="ml-[5px] pt-1">S</span>
    </div>
    <div class="absolute left-[1111px] top-[634px] flex h-[93px] w-[115px] items-center rounded-lg border-2 border-[#333] bg-[linear-gradient(#f2f2f5_0%,#d3d3da_20%,#b4b4be_22%,#a0a0aa_100%)]">
      <div class="flex h-full w-7 flex-col items-center justify-around pt-1"><span>B</span><span>R</span></div>
      <div class="flex h-[85px] w-[51px] items-center justify-center rounded-lg border-2 border-black bg-[linear-gradient(#999_0%,#777_15%,#555_17%,#444_100%)] pr-1 text-[24px] font-bold text-white"><span class="rotate-180 [writing-mode:vertical-rl]">Sph</span></div>
      <span class="ml-[5px] pt-1">S</span>
    </div>

    <div class="absolute left-[-69px] top-[1296px] flex h-[134px] w-[113px] items-center rounded-lg border-2 border-[#333] bg-[linear-gradient(#f2f2f5_0%,#d3d3da_14%,#b4b4be_15%,#a0a0aa_100%)]">
      <div class="ml-[25px] h-[126px] w-[52px] rounded-lg border-2 border-black bg-[linear-gradient(#999_0%,#777_10%,#555_12%,#444_100%)]"></div><span class="ml-[5px] pt-1">C</span>
    </div>
    <div class="absolute left-[140px] top-[1327px] flex h-[70px] w-[115px] items-center rounded-lg border-2 border-[#333] bg-[linear-gradient(#f2f2f5_0%,#d3d3da_24%,#b4b4be_26%,#a0a0aa_100%)]">
      <span class="w-7 pt-1 text-center">B</span>
      <div class="flex h-[62px] w-[51px] items-center justify-center rounded-lg border-2 border-black bg-[linear-gradient(#999_0%,#777_20%,#555_22%,#444_100%)] pr-1 text-[24px] font-bold text-white"><span class="rotate-180 [writing-mode:vertical-rl]">Cap</span></div>
      <span class="ml-[5px] pt-1">B</span>
    </div>
    <div class="absolute left-[782px] top-[1343px] flex h-[43px] w-[206px] items-center justify-center whitespace-nowrap rounded-lg border-2 border-[#333] bg-[linear-gradient(#f2f2f5_0%,#d3d3da_36%,#b4b4be_40%,#a0a0aa_100%)] pt-[6px]">Brep Cylinder Void</div>

    <svg class="absolute left-[1265px] top-[1353px] size-[99px]" viewBox="1268 1585 99 99"><defs><radialGradient id="dial"><stop offset="0" stop-color="#eee"/><stop offset="1" stop-color="#8c8c8c"/></radialGradient></defs><path d="M1291 1648A44 44 0 0 1 1331 1597M1338 1597A44 44 0 0 1 1377 1648" fill="none" stroke="#000" stroke-width="8"/><path d="M1274 1612L1290 1609L1292 1618L1279 1625z" fill="#000"/><circle cx="1334" cy="1639" r="39" fill="url(#dial)" stroke="#fff" stroke-width="4"/><circle cx="1334" cy="1639" r="42" fill="none" stroke="#222" stroke-width="2"/><path d="M1342 1602l12 4-10 10zM1298 1626l4-8 8 10zM1371 1648l-12 2 8 10zM1312 1672l8-8 2 12z" fill="#fff"/></svg>
    <svg class="absolute left-0 top-[1410px] h-[42px] w-[124px]" viewBox="3 1642 124 42"><path d="M0 1643H126V1700H0z" fill="url(#silver)" stroke="#000" stroke-width="3"/><path d="M7 1649H53V1690H7z" fill="#aaa" stroke="#222" stroke-width="2"/><path d="M30 1660V1684" stroke="#000" stroke-width="4"/><path d="M22 1670H38L30 1682z" fill="#000"/><path d="M76 1682L86 1668L82 1664L96 1660L95 1676L90 1672L82 1686z" fill="#f0b030" stroke="#4a3408" stroke-width="2"/><circle cx="101" cy="1657" r="4" fill="#eee" stroke="#444" stroke-width="2"/></svg>
  </div>
</section>

<!-- split handle -->
<div class="relative bg-black"><div class="absolute left-2 top-[786px] h-32 w-2 rounded-full bg-[#8c8c8c]"></div></div>

<!-- Rhino -->
<section class="flex min-w-0 flex-col overflow-hidden bg-[#d8d9dd] pl-[6px]">
  <div class="-ml-[6px] flex h-2 shrink-0 border-b border-[#f4f4f4]"><div class="w-[727px] border-r-2 border-[#c6c6c8] bg-[#dfdfe1]"></div><div class="flex-1 bg-[#eaeaef]"></div></div>
  <div class="flex h-[94px] shrink-0">
    <div class="flex w-[26px] flex-col items-center justify-center gap-[6px] rounded-l-lg bg-[#ececec] [&>i]:size-[6px] [&>i]:rounded-full [&>i]:border-2 [&>i]:border-[#a8a8a8]"><i></i><i></i><i></i><i></i></div>
    <div class="ml-[2px] flex min-w-0 flex-1 flex-col">
      <div class="relative flex h-10 shrink-0 pl-[2px] text-[21px] text-[#6e6e6e] [&>button]:shrink-0 [&>button]:overflow-hidden [&>button]:whitespace-nowrap [&>button]:pl-5 [&>button]:pt-px [&>button]:text-left">
        <button class="w-20">Sta...</button><button class="w-[77px]">CPl...</button><button class="w-[79px] rounded-t-lg bg-[#ececec] text-[#1c1c1c]">Set...</button><button class="w-[73px]">Di...</button><button class="w-[69px]">Se...</button><button class="w-[113px]">Viewp...</button><button class="w-[78px]">Vis...</button><button class="w-[84px]">Tra...</button><button class="w-[94px]">Curv...</button><button class="w-[102px]">Surfa...</button><button class="w-[89px]">Soli...</button><button class="w-[91px]">Sub...</button><button class="w-[91px]">Mes...</button><button class="w-[99px]">Rend...</button><button class="w-[77px]">Dr...</button><button class="w-[80px]">Ne...</button>
        <svg class="absolute right-1 top-[6px] size-6" viewBox="0 0 24 24"><use href="#gear"/></svg>
      </div>
      <div class="-ml-px flex h-[54px] bg-[#ececec] [&_svg]:h-[54px] [&_svg]:w-14 [&_svg]:shrink-0 [&_svg_*]:[vector-effect:non-scaling-stroke]">
        <svg viewBox="79 144 120 162" preserveAspectRatio="none"><path d="M118 288Q102 250 101 236Q105 225 118 240L116 182Q120 172 128 182L130 215L132 170Q139 158 147 170V215L150 174Q158 164 163 178L162 218L167 186Q174 180 175 190L172 262L165 288z" fill="#fff" stroke="#000" stroke-width="2.500"/></svg>
        <svg viewBox="200 144 120 162" preserveAspectRatio="none" fill="none"><ellipse cx="262" cy="225" rx="45" ry="20" stroke="#888" stroke-width="3"/><ellipse cx="262" cy="228" rx="13" ry="63" stroke="#888" stroke-width="2"/><path d="M240 242Q300 248 307 226M274 205Q276 270 262 290Q250 285 250 250" stroke="#000" stroke-width="3"/><path d="M238 242L262 230V254zM274 198L264 222H284z" fill="#000"/></svg>
        <svg viewBox="320 144 120 162" preserveAspectRatio="none" fill="none"><path d="M347 278L374 246" stroke="#000" stroke-width="6"/><ellipse cx="393" cy="213" rx="27" ry="38" fill="#f6f6f6" stroke="#000" stroke-width="2"/><path d="M382 202H404M393 188V216M382 228H404" stroke="#000" stroke-width="3"/></svg>
        <svg viewBox="440 144 120 162" preserveAspectRatio="none" fill="none"><path d="M470 270L494 244" stroke="#000" stroke-width="5"/><ellipse cx="510" cy="217" rx="27" ry="37" fill="#f6f6f6" stroke="#000" stroke-width="2"/><path d="M460 168H480L460 194zM546 168H526L546 194zM460 288H480L460 262zM546 288H526L546 262z" fill="#000"/></svg>
        <svg viewBox="561 144 120 162" preserveAspectRatio="none" fill="none"><path d="M583 284L604 258" stroke="#000" stroke-width="6"/><ellipse cx="621" cy="230" rx="27" ry="37" fill="#f6f6f6" stroke="#000" stroke-width="2"/><path d="M604 170H669V248H604z" stroke="#000" stroke-width="2.500" stroke-dasharray="4 4"/></svg>
        <svg viewBox="681 144 120 162" preserveAspectRatio="none" fill="none"><path d="M706 284L727 254" stroke="#000" stroke-width="6"/><ellipse cx="751" cy="219" rx="32" ry="43" fill="#f6f6f6" stroke="#000" stroke-width="2"/><ellipse cx="758" cy="210" rx="14" ry="20" fill="#f4e640" stroke="#555" stroke-width="2"/><ellipse cx="744" cy="234" rx="12" ry="16" fill="#f4e640" stroke="#555" stroke-width="2"/></svg>
        <svg viewBox="801 144 120 162" preserveAspectRatio="none" fill="none"><path d="M842 196Q872 168 904 204L894 210Q872 190 850 206z" fill="#444" stroke="#000"/><path d="M822 226L830 182L854 214z" fill="#000"/><path d="M837 290L854 268" stroke="#000" stroke-width="6"/><ellipse cx="868" cy="246" rx="20" ry="28" fill="#f6f6f6" stroke="#000" stroke-width="2"/><path d="M900 305L924 277V305z" fill="#666"/></svg>
        <svg viewBox="922 144 120 162" preserveAspectRatio="none" fill="none"><path d="M940 258L962 234" stroke="#000" stroke-width="6"/><ellipse cx="978" cy="206" rx="27" ry="37" fill="#f6f6f6" stroke="#000" stroke-width="2"/><path d="M976 208L1014 258" stroke="#000" stroke-width="2" stroke-dasharray="2 6"/><path d="M1016 260H1029V280H1016z" fill="#fff" stroke="#000" stroke-width="3"/></svg>
        <svg viewBox="0 0 56 54"><path d="M12 46L22 36" stroke="#000" stroke-width="6"/><circle cx="33" cy="25" r="15" fill="#f6f6f6" stroke="#000" stroke-width="2"/><text x="33" y="31" text-anchor="middle" font-size="16" font-weight="bold" font-family="Liberation Sans">1:1</text></svg>
        <div class="ml-[6px] mr-[3px] w-[2px] bg-[#b8bfd2]"></div>
        <svg viewBox="1188 144 120 162" preserveAspectRatio="none"><path d="M1232 174H1264L1272 190V282H1225V190z" fill="#cc2218"/><path d="M1231 174H1266V180H1231z" fill="#222"/><path d="M1230 190L1234 232M1267 190L1262 232" stroke="#f8b0a8" stroke-width="2"/><path d="M1230 238H1268L1262 252H1236z" fill="#fff"/><path d="M1240 252L1250 282L1258 252" stroke="#701008" fill="none" stroke-width="2"/><path d="M1226 276H1236V282H1226zM1262 276H1272V282H1262z" fill="#fd0"/></svg>
        <svg viewBox="1308 144 120 162" preserveAspectRatio="none"><path d="M1346 180H1391V282H1346z" fill="#7c7c88" stroke="#d42a1c" stroke-width="2"/><path d="M1348 180H1389V186H1348z" fill="#d42a1c"/><path d="M1368 198V282" stroke="#000" stroke-width="2"/><path d="M1345 188H1354V208H1345zM1382 188H1391V208H1382zM1345 254H1354V280H1345zM1382 254H1391V280H1382z" fill="#111"/></svg>
        <svg viewBox="1428 144 120 162" preserveAspectRatio="none"><path d="M1448 255H1524" stroke="#999" stroke-width="2"/><path d="M1472 200H1504L1512 218V244H1464V218z" fill="url(#red)" stroke="#701008"/><path d="M1474 204H1502L1506 218H1470z" fill="#fff"/><path d="M1467 222H1478V236H1467zM1498 222H1510V236H1498z" fill="#fd3"/><path d="M1464 244H1476V252H1464zM1500 244H1512V252H1500z" fill="#111"/></svg>
        <svg viewBox="0 144 120 162" preserveAspectRatio="none"><path d="M14 256H107" stroke="#999" stroke-width="3"/><path d="M18 240V222L48 214L58 199H82L98 222V240z" fill="url(#red)" stroke="#a01810"/><path d="M56 216L63 204H82V216z" fill="#fff"/><ellipse cx="34" cy="240" rx="9" ry="11" fill="#ddd" stroke="#000" stroke-width="3"/><ellipse cx="82" cy="240" rx="9" ry="11" fill="#ddd" stroke="#000" stroke-width="3"/></svg>
        <svg viewBox="120 144 120 162" preserveAspectRatio="none"><path d="M134 256H227" stroke="#999" stroke-width="3"/><path d="M223 240V222L196 214L186 199H160L144 222V240z" fill="url(#red)" stroke="#a01810"/><path d="M156 216V204H180L187 216z" fill="#fff"/><ellipse cx="160" cy="240" rx="9" ry="11" fill="#ddd" stroke="#000" stroke-width="3"/><ellipse cx="207" cy="240" rx="9" ry="11" fill="#ddd" stroke="#000" stroke-width="3"/></svg>
        <svg viewBox="240 144 120 162" preserveAspectRatio="none"><path d="M262 256H339" stroke="#999" stroke-width="3"/><path d="M286 199H318L326 216V244H279V216z" fill="url(#red)" stroke="#a01810"/><path d="M288 203H316L320 214H284z" fill="#fff"/><path d="M282 230H323V236H282z" fill="#701008"/><path d="M279 244H292V252H279zM314 244H326V252H314z" fill="#111"/></svg>
        <svg viewBox="360 144 120 162" preserveAspectRatio="none"><path d="M382 240L390 212L414 186Q440 176 456 202L459 212L440 238L420 246L412 262L400 264L382 250z" fill="url(#red)" stroke="#a01810"/><path d="M398 218L412 202L424 208L408 232z" fill="#fff"/><path d="M430 200L440 190L450 200L436 210z" fill="#fff"/><ellipse cx="420" cy="252" rx="6" ry="10" fill="#ddd" stroke="#000" stroke-width="3"/><ellipse cx="446" cy="224" rx="6" ry="10" fill="#ddd" stroke="#000" stroke-width="3"/><path d="M384 236L390 240" stroke="#fd0" stroke-width="4"/></svg>
        <div class="mx-1 w-[2px] bg-[#b8bfd2]"></div>
        <svg viewBox="500 144 120 162" preserveAspectRatio="none"><path d="M553 198Q562 172 580 158H606V184L592 186L572 192L560 200z" fill="#fff" stroke="#000" stroke-width="2"/><path d="M562 190L576 170M568 194L584 174" stroke="#000" stroke-width="1"/><path d="M606 156H614V190H606z" fill="#000"/><path d="M517 278V258L536 250L548 236H570L596 260V278z" fill="#888" stroke="#444"/><path d="M540 250L550 240H566L578 252z" fill="#ddd"/><ellipse cx="534" cy="276" rx="9" ry="11" fill="#ddd" stroke="#000" stroke-width="3"/><ellipse cx="580" cy="276" rx="9" ry="11" fill="#ddd" stroke="#000" stroke-width="3"/></svg>
        <svg viewBox="620 144 120 162" preserveAspectRatio="none"><path d="M637 202Q637 192 646 190H666L674 176H702L710 190H720Q726 192 726 202V262Q726 272 716 272H646Q637 272 637 262z" fill="#222"/><ellipse cx="689" cy="236" rx="27" ry="36" fill="#444" stroke="#eee" stroke-width="2"/><ellipse cx="689" cy="236" rx="17" ry="23" fill="#1c3030" stroke="#999" stroke-width="2"/><path d="M682 226L692 220L696 232z" fill="#8aa0e0"/></svg>
        <svg viewBox="740 144 120 162" preserveAspectRatio="none"><path d="M792 164H850V244H798L792 236z" fill="#b8a850" stroke="#222" stroke-width="2"/><path d="M800 166H842V196H800z" fill="#eee"/><path d="M802 212H838V242H802z" fill="#444"/><path d="M757 278V258L776 250L788 236H810L836 260V278z" fill="#888" stroke="#444"/><path d="M780 250L790 240H806L818 252z" fill="#ddd"/><ellipse cx="774" cy="276" rx="9" ry="11" fill="#ddd" stroke="#000" stroke-width="3"/><ellipse cx="820" cy="276" rx="9" ry="11" fill="#ddd" stroke="#000" stroke-width="3"/></svg>
        <svg viewBox="860 144 120 162" preserveAspectRatio="none" fill="none"><path d="M894 246H950L966 287H878zM888 260H955M882 274H960M908 246L900 287M922 246V287M936 246L944 287" stroke="#888" stroke-width="1"/><ellipse cx="921" cy="231" rx="22" ry="31" fill="url(#ball)" stroke="#222" stroke-width="2"/></svg>
        <svg viewBox="0 0 56 54" fill="none"><path d="M18 34H42L50 47H10zM16 38H46M13 42H48M25 34L22 47M31 34V47M36 34L41 47" stroke="#888" stroke-width="1"/><circle cx="31" cy="29" r="10.500" fill="url(#ball)" stroke="#222" stroke-width="2"/><text x="6" y="27" font-size="27" font-family="Liberation Sans" fill="#000">2</text></svg>
        <div class="ml-[5px] mr-[3px] w-[2px] bg-[#b8bfd2]"></div>
        <svg viewBox="1124 144 120 162" preserveAspectRatio="none" fill="none"><ellipse cx="1186" cy="228" rx="37" ry="52" stroke="#000" stroke-width="2"/><path d="M1186 176V194M1186 262V280M1149 228H1162M1210 228H1223" stroke="#000" stroke-width="2"/><path d="M1180 219H1192V238H1180z" fill="#fff" stroke="#000" stroke-width="2.500"/></svg>
        <svg viewBox="1246 144 120 162" preserveAspectRatio="none" fill="none"><ellipse cx="1307" cy="226" rx="45" ry="62" stroke="#000" stroke-width="2"/><path d="M1307 164V184M1307 268V288M1262 226H1276M1338 226H1352" stroke="#000" stroke-width="2"/><ellipse cx="1311" cy="220" rx="15" ry="22" fill="#ffe820" stroke="#333" stroke-width="2"/><ellipse cx="1298" cy="243" rx="12" ry="17" fill="#ffe820" stroke="#333" stroke-width="2"/></svg>
        <svg viewBox="1366 144 120 162" preserveAspectRatio="none" fill="none"><path d="M1396 246H1452L1468 292H1380zM1390 260H1458M1386 276H1464M1410 246L1402 292M1438 246L1446 292" stroke="#888" stroke-width="1"/><path d="M1424 266H1458" stroke="#d02020" stroke-width="3"/><path d="M1424 266V292" stroke="#28a020" stroke-width="3"/><path d="M1424 212V266" stroke="#000" stroke-width="2" stroke-dasharray="4 3"/><path d="M1415 164H1432V186H1442L1424 212L1406 186H1415z" fill="#fff" stroke="#000" stroke-width="2"/></svg>
        <span class="ml-2 self-center text-[28px] leading-none text-[#fafafa]">»</span>
      </div>
    </div>
  </div>

  <div class="mt-[6px] flex min-h-0 flex-1 gap-[6px]">
    <!-- tool palette and snaps -->
    <div class="flex w-[252px] shrink-0 flex-col gap-[6px]">
      <div class="h-[774px] shrink-0 rounded-t-lg bg-[#ececec]">
        <div class="flex h-[27px] items-center justify-center gap-[6px] border-b-2 border-[#d8d9dd] [&>i]:size-[6px] [&>i]:rounded-full [&>i]:border-2 [&>i]:border-[#a8a8a8]"><i></i><i></i><i></i><i></i></div>
        <div class="px-[17px] pt-[22px]"><input aria-label="Command" placeholder="Command" class="h-10 w-full border border-[#d4d4d4] border-b-[#b4b4b4] bg-white px-2 text-[24px] placeholder:text-[#c0c0c0]"></div>
        <div class="ml-[9px] mt-[25px] grid w-[224px] grid-cols-4 [&>svg]:size-14 [&_*]:[vector-effect:non-scaling-stroke]">
          <svg viewBox="57 176 167 137" preserveAspectRatio="none"><path d="M109 205V272L126 260L146 286L160 280L144 252L166 246z" fill="#fff" stroke="#222" stroke-width="2"/></svg>
          <svg viewBox="223 176 167 137" preserveAspectRatio="none"><ellipse cx="303" cy="242" rx="13" ry="10" fill="#fff" stroke="#000" stroke-width="2"/><use href="#corner" x="390" y="313"/></svg>
          <svg viewBox="390 176 167 137" preserveAspectRatio="none" fill="#fff" stroke="#000" stroke-width="2"><path d="M432 279L461 216L516 264" fill="none"/><path d="M422 272H442V287H422zM451 208H471V223H451zM506 257H526V272H506z"/><use href="#corner" x="557" y="313" stroke="none"/></svg>
          <svg viewBox="557 176 167 137" preserveAspectRatio="none" fill="#fff" stroke="#000" stroke-width="2"><path d="M594 215Q680 196 682 245Q684 290 594 275" fill="none"/><path d="M584 208H604V223H584zM584 267H604V282H584zM668 193H688V208H668zM680 276H700V291H680z"/><use href="#corner" x="724" y="313" stroke="none"/></svg>

          <svg viewBox="57 314 167 137" preserveAspectRatio="none" fill="#fff" stroke="#000" stroke-width="2"><ellipse cx="135" cy="379" rx="55" ry="44" fill="none"/><path d="M138 377L174 348" stroke="#888"/><path d="M128 370H148V384H128zM164 341H184V355H164z"/><use href="#corner" x="222" y="450" stroke="none"/></svg>
          <svg viewBox="223 314 167 137" preserveAspectRatio="none" fill="#fff" stroke="#000" stroke-width="2"><ellipse cx="306" cy="386" rx="58" ry="33" fill="none"/><path d="M306 354V386H360" stroke="#888" fill="none"/><path d="M296 346H316V360H296zM296 380H316V394H296zM350 380H370V394H350z"/><use href="#corner" x="390" y="450" stroke="none"/></svg>
          <svg viewBox="390 314 167 137" preserveAspectRatio="none" fill="#fff" stroke="#000" stroke-width="2"><path d="M432 343V421L516 381" fill="none" stroke="#888"/><path d="M432 343Q490 348 516 381" fill="none"/><path d="M422 336H442V350H422zM422 414H442V428H422zM506 374H526V388H506z"/><use href="#corner" x="557" y="450" stroke="none"/></svg>
          <svg viewBox="557 314 167 137" preserveAspectRatio="none" fill="#fff" stroke="#000" stroke-width="2"><path d="M591 356H694V410H591z" fill="none"/><path d="M680 350H700V364H680zM584 399H604V413H584z"/><use href="#corner" x="724" y="450" stroke="none"/></svg>

          <svg viewBox="57 451 167 137" preserveAspectRatio="none" fill="#fff" stroke="#000" stroke-width="2"><path d="M86 516L110 482H160L184 516L160 551H110z" fill="none"/><path d="M138 516H180" stroke="#888"/><path d="M128 507H148V522H128zM170 507H190V522H170z"/><use href="#corner" x="222" y="587" stroke="none"/></svg>
          <svg viewBox="223 451 167 137" preserveAspectRatio="none" fill="#fff" stroke="#000" stroke-width="2"><path d="M270 477H358V540" fill="none" stroke="#888"/><path d="M258 480Q354 476 354 553" fill="none" stroke="#222" stroke-width="4"/><path d="M248 473H268V487H248zM344 546H364V560H344z"/><use href="#corner" x="390" y="587" stroke="none"/></svg>
          <svg viewBox="390 451 167 137" preserveAspectRatio="none" fill="#fff" stroke="#000" stroke-width="2"><path d="M450 480H522L492 558L427 534Q445 510 450 480z" fill="url(#blue)"/><path d="M482 482Q476 520 458 545M440 514H508" stroke="#223" fill="none"/><path d="M440 473H460V487H440zM512 473H532V487H512zM417 527H437V541H417zM482 551H502V565H482z"/><use href="#corner" x="557" y="587" stroke="none"/></svg>
          <svg viewBox="557 451 167 137" preserveAspectRatio="none" fill="#fff" stroke="#000" stroke-width="2"><path d="M584 497L626 472Q680 480 689 525V543L647 565V540Q640 500 584 497z"/><path d="M614 498L658 482Q686 496 688 516L647 540Q640 508 614 498z" fill="url(#blue)" stroke-width="1"/><use href="#corner" x="724" y="587" stroke="none"/></svg>

          <svg viewBox="57 588 167 137" preserveAspectRatio="none" stroke="#000" stroke-width="2"><path d="M86 624L128 610L184 625V676L142 698L86 681z" fill="#6a84f4"/><path d="M86 624L128 610L184 625L142 646z" fill="#c0ccff" stroke="none"/><path d="M184 625V676L142 698V646z" fill="#3a50b8" stroke="none"/><path d="M86 624L128 610L184 625V676L142 698L86 681z" fill="none"/><use href="#corner" x="222" y="724" stroke="none"/></svg>
          <svg viewBox="223 588 167 137" preserveAspectRatio="none" stroke="#000" stroke-width="2"><ellipse cx="328" cy="639" rx="42" ry="35" fill="url(#blue)"/><ellipse cx="284" cy="674" rx="42" ry="34" fill="url(#blue)"/><path d="M287 640Q330 655 370 635M335 606Q320 640 330 673M244 670Q285 690 326 676M278 641Q262 670 278 706" fill="none" stroke="#223" stroke-width="1.500"/><use href="#corner" x="390" y="724" stroke="none"/></svg>
          <svg viewBox="390 588 167 137" preserveAspectRatio="none" stroke="#000" stroke-width="2"><ellipse cx="474" cy="617" rx="33" ry="12" fill="none"/><path d="M410 644Q474 668 538 644V694Q474 722 410 694z" fill="url(#blue)"/><ellipse cx="474" cy="684" rx="30" ry="13" fill="none" stroke="#fff" stroke-width="4"/><use href="#corner" x="557" y="724" stroke="none"/></svg>
          <svg viewBox="557 588 167 137" preserveAspectRatio="none" stroke="#000" stroke-width="2"><path d="M579 682Q606 660 634 610L706 630Q676 660 650 703Q610 692 579 682z" fill="url(#blue)"/><path d="M602 658L682 656M620 632L690 646M604 690Q650 650 658 616M628 698Q664 650 684 624M579 682L700 634" fill="none" stroke="#223" stroke-width="1"/><use href="#corner" x="724" y="724" stroke="none"/></svg>

          <svg viewBox="57 725 167 137" preserveAspectRatio="none" stroke="#222" stroke-width="2"><path d="M76 778Q76 768 92 770L104 766Q92 752 106 744Q120 738 126 752L124 760L148 744L158 758L146 764Q146 774 156 772L158 784L142 792L134 780Q118 776 120 792L122 800L94 810L88 796Q74 794 76 778z" fill="#f0a030"/><path d="M124 796L146 782Q150 796 162 788L166 780L184 798L176 806Q186 814 198 806L202 816L186 828Q198 840 188 846Q176 846 176 836L158 842L148 828Q160 816 144 812L134 818z" fill="#fff"/><use href="#corner" x="222" y="861" stroke="none"/></svg>
          <svg viewBox="223 725 167 137" preserveAspectRatio="none"><path d="M240 846V784L266 752L268 812L350 748L326 816L370 822L328 838L332 848z" fill="url(#fire)"/><path d="M240 784L266 752L268 812L350 748L326 816L370 822L328 838" fill="none" stroke="#300" stroke-width="2"/></svg>
          <svg viewBox="390 725 167 137" preserveAspectRatio="none" stroke="#000" stroke-width="2"><path d="M410 791H470V815H410z" fill="#fff"/><path d="M492 798L526 826L506 844L472 816z" fill="#eee"/><path d="M468 750H510L470 816z" fill="#1a2a78" stroke="none"/></svg>
          <svg viewBox="557 725 167 137" preserveAspectRatio="none" stroke="#000" stroke-width="2"><path d="M584 801H694V826H584z" fill="#fff"/><path d="M642 759H684L644 828z" fill="#1a2a78" stroke="none"/></svg>

          <svg viewBox="57 862 167 137" preserveAspectRatio="none" stroke="#000" stroke-width="5"><ellipse cx="117" cy="942" rx="27" ry="23"/><ellipse cx="158" cy="942" rx="27" ry="23"/><ellipse cx="138" cy="914" rx="27" ry="23"/><g stroke="none"><ellipse cx="117" cy="942" rx="22" ry="18" fill="#fff"/><ellipse cx="158" cy="942" rx="22" ry="18" fill="#1a2a78"/><ellipse cx="138" cy="914" rx="21" ry="18" fill="#6a84f4"/><use href="#corner" x="222" y="999"/></g></svg>
          <svg viewBox="223 862 167 137" preserveAspectRatio="none" stroke="#000" stroke-width="2"><ellipse cx="276" cy="950" rx="22" ry="18" fill="#fff"/><ellipse cx="336" cy="950" rx="22" ry="18" fill="#1a2a78"/><ellipse cx="306" cy="911" rx="22" ry="18" fill="#6a84f4"/></svg>
          <svg viewBox="390 862 167 137" preserveAspectRatio="none" stroke="#000" stroke-width="2"><path d="M411 909Q504 890 502 982" fill="none" stroke="#222" stroke-width="4"/><path d="M434 899H454V913H434zM494 948H514V962H494z" fill="#fff"/></svg>
          <svg viewBox="557 862 167 137" preserveAspectRatio="none" stroke="#000" stroke-width="2"><path d="M579 909Q672 896 672 980" fill="none" stroke-width="4"/><path d="M577 888H624L694 944V984" fill="none" stroke-dasharray="2 3"/><path d="M614 879H634V893H614zM686 938H706V952H686z" fill="#fff"/><use href="#corner" x="724" y="999" stroke="none"/></svg>

          <svg viewBox="57 1000 167 137" preserveAspectRatio="none"><path d="M92 1016L184 1032V1058H170L154 1050V1104L164 1110L158 1120L120 1112V1102L128 1096V1044L104 1040L98 1052H86V1028z" fill="#6a84f4" stroke="#000" stroke-width="2"/><path d="M92 1016L184 1032L178 1040L88 1026z" fill="#c0ccff"/></svg>
          <svg viewBox="223 1000 167 137" preserveAspectRatio="none" stroke="#000" stroke-width="2"><path d="M254 1080H292V1110H254z" fill="#eee"/><path d="M326 1021H364V1051H326z" fill="url(#blue)"/><path d="M292 1080L322 1056M304 1054H323V1070" fill="none"/><use href="#corner" x="390" y="1136" stroke="none"/></svg>
          <svg viewBox="390 1000 167 137" preserveAspectRatio="none" stroke="#000" stroke-width="2" fill="url(#blue)"><path d="M422 1021H460V1051H422z"/><path d="M494 1036H532V1066H494z"/><path d="M470 1050H508V1080H470z"/><path d="M494 1090H532V1120H494z"/><path d="M422 1080H460V1110H422z" fill="#eee"/></svg>
          <svg viewBox="557 1000 167 137" preserveAspectRatio="none" stroke="#000" stroke-width="2"><path d="M577 1021H610V1091H577z" fill="url(#gray)"/><path d="M623 1096L682 1046L704 1064L645 1112z" fill="url(#blue)"/><path d="M612 1030Q650 1032 664 1050M664 1034V1051H644" fill="none"/></svg>

          <svg viewBox="57 1137 167 137" preserveAspectRatio="none" stroke="#000" stroke-width="2"><path d="M86 1176L128 1158L190 1176V1226L146 1252L86 1234z" fill="#4c66dc"/><path d="M86 1176L128 1158L190 1176L146 1194z" fill="#c0ccff" stroke="none"/><path d="M146 1194L190 1176V1226L164 1240V1216L120 1214V1242L86 1234V1176z" fill="#5a74e8" stroke="none"/><path d="M120 1214L146 1222L164 1216V1240L146 1252L120 1244z" fill="#eee" stroke-width="1"/><path d="M86 1176L128 1158L190 1176V1226L146 1252L86 1234z" fill="none"/><use href="#corner" x="222" y="1273" stroke="none"/></svg>
          <svg viewBox="223 1137 167 137" preserveAspectRatio="none" stroke="#000" stroke-width="2"><path d="M242 1237L272 1212H370L344 1237z" fill="url(#blue)"/><path d="M270 1224V1180M306 1224V1180M342 1224V1180" stroke="#fff" stroke-width="6"/><path d="M256 1184L270 1160L284 1184zM292 1184L306 1160L320 1184zM328 1184L342 1160L356 1184z" fill="#fff" stroke="none"/><use href="#corner" x="390" y="1273" stroke="none"/></svg>
          <svg viewBox="390 1137 167 137" preserveAspectRatio="none" stroke="#000" stroke-width="2" fill="#8ca0fa"><path d="M415 1158H443V1179H415zM457 1158H485V1179H457zM499 1158H527V1179H499zM415 1193H443V1214H415zM457 1193H485V1214H457zM499 1193H527V1214H499zM457 1227H485V1248H457zM499 1227H527V1248H499z"/><path d="M415 1227H443V1248H415z" fill="#eee"/><use href="#corner" x="557" y="1273" stroke="none"/></svg>
          <svg viewBox="557 1137 167 137" preserveAspectRatio="none" stroke="#000" stroke-width="2" fill="#e4e4e4"><path d="M614 1158H670V1184H614zM626 1192H658V1214H626zM620 1222H664V1252H620z"/><path d="M642 1150V1258" stroke="#c43428" stroke-opacity=".8" stroke-width="4"/><use href="#corner" x="724" y="1273" stroke="none"/></svg>

          <svg viewBox="57 1274 167 137" preserveAspectRatio="none" stroke="#000" stroke-width="2"><path d="M86 1316L106 1306L130 1314V1368L112 1378L86 1370z" fill="#eee"/><path d="M132 1300L134 1296L160 1302L152 1320L124 1320z" fill="#fff"/><path d="M116 1380Q140 1350 148 1322L172 1310L190 1318Q180 1350 158 1390L142 1392z" fill="#5a7af0"/><use href="#corner" x="222" y="1410" stroke="none"/></svg>
          <svg viewBox="223 1274 167 137" preserveAspectRatio="none" stroke="#222" stroke-width="4" fill="none"><use href="#corner" x="390" y="1410" stroke="none"/><path d="M278 1291H298V1394H278z" fill="#6a84f4" stroke="#000" stroke-width="2"/><ellipse cx="247" cy="1318" rx="12" ry="10" fill="#222" stroke="none"/><ellipse cx="330" cy="1317" rx="12" ry="10" fill="#222" stroke="none"/><path d="M248 1332L260 1364H282L272 1394M248 1336L280 1338M336 1334L350 1352L340 1370M350 1352L360 1378L372 1394M300 1336H336"/></svg>
          <svg viewBox="390 1274 167 137" preserveAspectRatio="none"><path d="M417 1352L430 1344L442 1362Q480 1318 534 1297Q480 1340 446 1387H440z" fill="#000"/><use href="#corner" x="557" y="1410"/></svg>
          <svg viewBox="557 1274 167 137" preserveAspectRatio="none" stroke="#000" stroke-width="2"><path d="M584 1322L614 1304L656 1312V1344L620 1370L584 1356z" fill="#bbb"/><path d="M584 1322L620 1330L656 1312M620 1330V1370" fill="none"/><path d="M670 1312L700 1370Q670 1390 640 1370z" fill="url(#gray)"/><use href="#corner" x="724" y="1410" stroke="none"/></svg>

          <svg viewBox="57 1411 167 137" preserveAspectRatio="none" stroke="#000" stroke-width="2"><path d="M122 1456Q130 1430 160 1427H192V1448L170 1450Q150 1462 134 1460z" fill="#fff"/><path d="M134 1452L152 1438M144 1456L164 1440" stroke-width="1"/><path d="M192 1426H203V1452H192z"/><path d="M136 1466L86 1503L146 1532L185 1505z" fill="#f4d878"/><path d="M136 1466L146 1532L185 1505z" fill="#b89838"/><use href="#corner" x="222" y="1547" stroke="none"/></svg>
        </div>
      </div>

      <div class="min-h-0 flex-1 rounded-t-lg bg-[#ececec]">
        <div class="flex h-[42px] items-center justify-between border-b-2 border-[#d8d9dd] pb-[2px] pl-[9px] pr-2"><h2 class="text-[24px] text-[#8c8c8c]">OSnap</h2><svg class="size-6" viewBox="0 0 24 24"><use href="#gear"/></svg></div>
        <div class="flex h-10 bg-[#d8d9dd]">
          <button class="flex w-[73px] items-center justify-center rounded-tr-lg bg-[#ececec] pr-[2px]" aria-label="Object snaps"><svg class="size-8" viewBox="0 0 32 32" fill="none"><circle cx="14" cy="16" r="13" stroke="#888" stroke-width="2"/><path d="M17 16H32M11 13h6v6h-6z" stroke="#000" stroke-width="2"/></svg></button>
          <button class="flex w-[70px] items-center justify-center" aria-label="Selection filter"><svg class="size-8" viewBox="0 0 32 32"><path d="M6 6Q16 2 26 6L18 18V28L14 26V18z" fill="#aaa" stroke="#222" stroke-width="2"/><path d="M27 2h4v4M6 30H2v-4" fill="none" stroke="#000" stroke-width="2"/></svg></button>
        </div>
        <div class="flex flex-col pl-7 pt-[15px] text-[22px] [&_input]:size-6 [&_input]:appearance-none [&_input]:rounded-[5px] [&_input]:border [&_input]:border-[#cacaca] [&_input]:border-t-[#b0b0b0] [&_input]:bg-white [&_label]:flex [&_label]:h-[30px] [&_label]:items-center [&_label]:gap-2">
          <label><input type="checkbox">End</label><label><input type="checkbox">Near</label><label><input type="checkbox">Point</label><label><input type="checkbox">Mid</label><label><input type="checkbox">Cen</label><label><input type="checkbox">Int</label><label><input type="checkbox">Perp</label><label><input type="checkbox">Tan</label><label><input type="checkbox">Quad</label><label><input type="checkbox">Knot</label><label><input type="checkbox">Vertex</label><label><input type="checkbox">Project</label>
          <label class="mt-[34px]"><input type="checkbox">Disable</label>
        </div>
      </div>
    </div>

    <!-- viewport -->
    <div class="flex min-w-0 flex-1 flex-col">
      <div class="relative min-h-0 flex-1 overflow-hidden bg-white">
        <svg class="absolute left-0 top-0 h-[892px] w-[600px]" viewBox="20 14 1518 1554" preserveAspectRatio="none">
          <defs>
            <linearGradient id="face" x1="288" y1="600" x2="1240" y2="800" gradientUnits="userSpaceOnUse"><stop offset="0" stop-color="#333"/><stop offset=".35" stop-color="#363636"/><stop offset="1" stop-color="#525252"/></linearGradient>
            <linearGradient id="cap1" x1="0" y1="84" x2="0" y2="122" gradientUnits="userSpaceOnUse"><stop offset="0" stop-color="#b8b8b8"/><stop offset=".5" stop-color="#c6c6c6"/><stop offset="1" stop-color="#aaa"/></linearGradient>
            <linearGradient id="cap2" x1="200" y1="1190" x2="190" y2="1230" gradientUnits="userSpaceOnUse"><stop offset="0" stop-color="#a6a6a6"/><stop offset="1" stop-color="#6c6c6c"/></linearGradient>
            <linearGradient id="green" x1="620" y1="1050" x2="1270" y2="1190" gradientUnits="userSpaceOnUse"><stop offset="0" stop-color="#409328"/><stop offset=".45" stop-color="#429528"/><stop offset=".75" stop-color="#357a20"/><stop offset="1" stop-color="#1f4e14"/></linearGradient>
            <radialGradient id="shine" cx="765" cy="1070" r="130" gradientUnits="userSpaceOnUse" gradientTransform="matrix(1 0 0 .72 0 300)"><stop offset="0" stop-color="#fff"/><stop offset=".22" stop-color="#e8ffe0"/><stop offset=".5" stop-color="#84f668"/><stop offset="1" stop-color="#4ea832" stop-opacity="0"/></radialGradient>
            <clipPath id="plane"><path d="M20 1218L520 1105L1031 1130L1260 1142L1538 1157V1518L20 1333z"/></clipPath>
          </defs>
          <g clip-path="url(#plane)"><path d="M20 1100H1538V1520H20z" fill="#fafafa"/><path d="M20 1218L1260 1100L1538 1157V1250L20 1270z" fill="#000" fill-opacity=".1"/><path id="minor" stroke="#b0b0b0" stroke-width="1" fill="none"/><path id="major" stroke="#666" stroke-width="2" fill="none"/></g>
          <path d="M418 1381L636 1292" stroke="#934040" stroke-width="3"/><path d="M1230 1243L1538 1267" stroke="#4c9a38" stroke-width="3"/>
          <path d="M212 86L105 1170Q103 1200 130 1208L300 1256L288 1218L462 122L478 86z" fill="#a7a7a7"/>
          <path d="M214 80L211 109L462 122L478 80z" fill="url(#cap1)"/><path d="M211 109L462 122" stroke="#888"/>
          <path d="M105 1170Q103 1200 130 1208L300 1256L288 1218z" fill="url(#cap2)"/>
          <path d="M468 100Q480 52 520 52Q540 52 560 68L1240 566Q1250 572 1247 585Q1243 605 1235 622L1080 1012L985 1060L640 1172L340 1256Q284 1266 289 1215L462 122z" fill="url(#face)"/>
          <path d="M424 1234L636 1172L640 1184L700 1047Q870 1052 1060 1043Q1200 1036 1224 1028Q1258 1080 1260 1160Q1250 1215 1234 1244Q1180 1270 1050 1285Q860 1306 640 1291Q480 1275 424 1234z" fill="url(#green)"/>
          <path d="M700 1047Q800 1052 900 1049L880 1180H642z" fill="url(#shine)"/>
          <path d="M970 1046L990 994Q1180 1000 1232 1020Q1200 1036 970 1046z" fill="#3a8424" stroke="#000" stroke-width="4"/>
          <path d="M988 1007Q1120 1015 1218 1026" fill="none" stroke="#000" stroke-width="4"/>
          <path d="M424 1234Q480 1275 640 1291Q860 1306 1050 1285Q1180 1270 1234 1244L1258 1160Q1254 1080 1224 1028" fill="none" stroke="#000" stroke-width="4"/>
          <path d="M544 1199Q860 1235 1100 1203Q1220 1188 1256 1166" fill="none" stroke="#031" stroke-width="3"/>
          <path d="M700 1047L640 1184L630 1182Q630 1240 641 1290M700 1047Q870 1052 1060 1043Q1180 1037 1224 1028" fill="none" stroke="#000" stroke-width="5"/>
          <path d="M858 1017V1046" stroke="#e02c20" stroke-width="3"/>
        </svg>
        <svg class="absolute left-0 top-[780px] h-[120px] w-[200px]" viewBox="0 780 200 120"><text transform="matrix(-1.280 .72 -1.550 -.28 112 790)" font-family="Liberation Sans" font-size="40" fill="#000" stroke="#000">Assem</text></svg>
        <svg class="absolute left-[36px] top-[1340px] h-[120px] w-[130px] text-[#444]" viewBox="0 0 130 120"><path d="M36 84V32M36 84L92 92M36 84L14 102" fill="none" stroke="#777" stroke-width="2"/><text x="42" y="26" font-size="24" fill="currentColor">z</text><text x="98" y="90" font-size="24" fill="currentColor">y</text><text x="14" y="104" font-size="24" fill="currentColor">x</text></svg>
        <div class="absolute left-[2px] top-[2px] flex h-[38px] gap-[2px] text-[24px] font-bold text-white"><span class="flex items-center bg-[#919191] px-[9px] pt-[2px]">Perspective</span><button class="flex w-8 items-center justify-center bg-[#919191]" aria-label="Viewport menu"><svg class="h-2 w-4" viewBox="0 0 16 8"><path d="M0 0h16l-8 8z" fill="#fff"/></svg></button></div>
      </div>
      <div class="flex h-[45px] shrink-0 items-center bg-[#ececec] pb-1 text-[25px]">
        <svg class="ml-[18px] size-8" viewBox="0 0 32 32" fill="none" stroke="#888" stroke-width="2"><path d="M2 14V3H14V14zM18 14V3H30V14zM2 29V18H14V29zM18 29V18H30V29z" stroke-dasharray="10 1"/></svg>
        <svg class="ml-[33px] size-8" viewBox="0 0 32 32"><path d="M2 3H30V29H2z" fill="#ececec" stroke="#a060a8" stroke-width="2" stroke-dasharray="8 1"/></svg>
        <span class="ml-[24px] text-[#666]">|</span><button class="ml-[34px] text-[#8e1e9c]">Perspective</button><span class="ml-10 text-[#666]">|</span><button class="ml-[34px]">Top</button><span class="ml-9 text-[#666]">|</span><button class="ml-9">Front</button>
      </div>
    </div>

    <!-- properties and layers -->
    <div class="flex w-[576px] shrink-0 flex-col gap-[6px]">
      <div class="flex h-[774px] shrink-0 flex-col overflow-hidden rounded-tl-lg bg-[#ececec]">
        <div class="relative flex h-[28px] shrink-0 items-center justify-center gap-[6px] border-b-2 border-[#d8d9dd] [&>i]:size-[6px] [&>i]:rounded-full [&>i]:border-2 [&>i]:border-[#a8a8a8]"><i></i><i></i><i></i><i></i><svg class="absolute right-1 top-[2px] size-6" viewBox="0 0 24 24"><use href="#gear"/></svg></div>
        <div class="flex min-h-0 flex-1">
          <div class="flex w-[540px] flex-col pl-4 pr-6 text-[22px]">
            <div class="flex h-[60px] shrink-0 items-center justify-center gap-3 pr-3">
              <svg class="size-12 bg-white" viewBox="0 0 48 48"><path d="M1 18Q1 13 6 12H10L12 8H18L20 12L24 6H38L42 12H44Q47 13 47 18V38Q47 42 42 42H6Q1 42 1 38z" fill="#2a2a2a" stroke="#555"/><path d="M6 16V38" stroke="#666" stroke-width="4"/><circle cx="28" cy="28" r="12" fill="#444" stroke="#eee" stroke-width="2"/><circle cx="28" cy="28" r="7" fill="#1c3030" stroke="#888" stroke-width="2"/></svg>
              <svg class="size-12" viewBox="0 0 48 48"><path d="M1 3H47V46H1z" fill="#ccc" stroke="#222" stroke-width="2"/><path d="M5 9H43V40H5z" fill="#eee" stroke="#62b0ec" stroke-width="3"/><path d="M9 13H39V36H9z" fill="#fff" stroke="#d43020" stroke-width="3"/></svg>
              <svg class="size-12" viewBox="0 0 48 48"><circle cx="36" cy="10" r="8" fill="url(#blueball)" stroke="#555" stroke-width="2"/><circle cx="27" cy="20" r="10" fill="url(#blueball)" stroke="#223" stroke-width="2"/><circle cx="15" cy="31" r="13" fill="url(#blueball)" stroke="#111" stroke-width="2"/></svg>
            </div>
            <h3 class="flex h-[62px] shrink-0 items-end pb-1 pl-[5px] leading-[36px]">Viewport</h3>
            <form class="grid grid-cols-[1fr_226px] gap-x-[20px] [&_label]:flex [&_label]:items-center [&_label]:justify-end [&_input[type=text]]:h-[34px] [&_input[type=text]]:border [&_input[type=text]]:border-[#d4d4d4] [&_input[type=text]]:border-b-[#b4b4b4] [&_input[type=text]]:bg-white [&_input[type=text]]:px-[7px] [&_input[type=text]]:disabled:bg-[#f4f4f4] [&_input[type=text]]:disabled:text-[#b8b8b8]">
              <label for="t" class="h-[54px]">Title</label><div class="flex items-center pl-[2px]"><input type="text" id="t" value="Perspective" class="w-full"></div>
              <label for="w" class="h-[54px]">Width</label><div class="flex items-center gap-[6px] pl-[2px]"><input type="text" id="w" value="600" disabled class="w-[195px]"><button type="button" disabled class="h-8 w-[23px] rounded-lg bg-[#f4f4f4] shadow-[0_0_2px_#bbb]" aria-label="Step width"><svg viewBox="0 0 23 32" fill="none" stroke="#b8b8b8" stroke-width="2"><path d="M6 11l5-5 5 5M6 21l5 5 5-5M0 16H23"/></svg></button></div>
              <label for="h" class="h-[54px]">Height</label><div class="flex items-center gap-[6px] pl-[2px]"><input type="text" id="h" value="1496" disabled class="w-[195px]"><button type="button" disabled class="h-8 w-[23px] rounded-lg bg-[#f4f4f4] shadow-[0_0_2px_#bbb]" aria-label="Step height"><svg viewBox="0 0 23 32" fill="none" stroke="#b8b8b8" stroke-width="2"><path d="M6 11l5-5 5 5M6 21l5 5 5-5M0 16H23"/></svg></button></div>
              <label for="p" class="h-12">Projection</label><div class="relative flex items-center"><select id="p" class="h-[33px] w-full appearance-none rounded-lg bg-white pl-3 shadow-[0_1px_2px_#999]"><option>Perspective</option></select><svg class="pointer-events-none absolute right-[10px] size-4" viewBox="0 0 16 16" fill="none" stroke="#222" stroke-width="2"><path d="M4 6l4-4 4 4M4 10l4 4 4-4"/></svg></div>
              <label for="d" class="h-12">Display mode</label><div class="relative flex items-center"><select id="d" class="h-[33px] w-full appearance-none rounded-lg bg-white pl-3 shadow-[0_1px_2px_#999]"><option>Wireframe</option></select><svg class="pointer-events-none absolute right-[10px] size-4" viewBox="0 0 16 16" fill="none" stroke="#222" stroke-width="2"><path d="M4 6l4-4 4 4M4 10l4 4 4-4"/></svg></div>
              <label for="l" class="h-11">Locked</label><div class="flex items-center"><input type="checkbox" id="l" class="size-6 appearance-none rounded-[5px] border border-[#cacaca] border-t-[#b0b0b0] bg-white"></div>
              <hr class="col-span-2 mt-[26px] border-t-2 border-[#cfcfcf]">
              <h3 class="col-span-2 flex h-[54px] items-end pb-1 pl-[5px] leading-[36px]">Camera</h3>
              <label for="c1" class="h-[54px]">Lens Length (mm)</label><div class="flex items-center gap-[6px] pl-[2px]"><input type="text" id="c1" value="30.0" class="w-[195px]"><button type="button" class="h-8 w-[23px] rounded-lg bg-white shadow-[0_0_2px_#999]" aria-label="Step lens length"><svg viewBox="0 0 23 32" fill="none" stroke="#222" stroke-width="2"><path d="M6 11l5-5 5 5M6 21l5 5 5-5"/><path d="M0 16H23" stroke="#ccc"/></svg></button></div>
              <label for="c2" class="h-[54px]">Rotation</label><div class="flex items-center gap-[6px] pl-[2px]"><input type="text" id="c2" value="0.0" class="w-[195px]"><button type="button" class="h-8 w-[23px] rounded-lg bg-white shadow-[0_0_2px_#999]" aria-label="Step rotation"><svg viewBox="0 0 23 32" fill="none" stroke="#222" stroke-width="2"><path d="M6 11l5-5 5 5M6 21l5 5 5-5"/><path d="M0 16H23" stroke="#ccc"/></svg></button></div>
              <label for="c3" class="h-[54px]">X Location</label><div class="flex items-center gap-[6px] pl-[2px]"><input type="text" id="c3" value="165.846" class="w-[195px]"><button type="button" class="h-8 w-[23px] rounded-lg bg-white shadow-[0_0_2px_#999]" aria-label="Step X"><svg viewBox="0 0 23 32" fill="none" stroke="#222" stroke-width="2"><path d="M6 11l5-5 5 5M6 21l5 5 5-5"/><path d="M0 16H23" stroke="#ccc"/></svg></button></div>
              <label for="c4" class="h-[54px]">Y Location</label><div class="flex items-center gap-[6px] pl-[2px]"><input type="text" id="c4" value="68.214" class="w-[195px]"><button type="button" class="h-8 w-[23px] rounded-lg bg-white shadow-[0_0_2px_#999]" aria-label="Step Y"><svg viewBox="0 0 23 32" fill="none" stroke="#222" stroke-width="2"><path d="M6 11l5-5 5 5M6 21l5 5 5-5"/><path d="M0 16H23" stroke="#ccc"/></svg></button></div>
              <label for="c5" class="h-[54px]">Z Location</label><div class="flex items-center gap-[6px] pl-[2px]"><input type="text" id="c5" value="45.479" class="w-[195px]"><button type="button" class="h-8 w-[23px] rounded-lg bg-white shadow-[0_0_2px_#999]" aria-label="Step Z"><svg viewBox="0 0 23 32" fill="none" stroke="#222" stroke-width="2"><path d="M6 11l5-5 5 5M6 21l5 5 5-5"/><path d="M0 16H23" stroke="#ccc"/></svg></button></div>
            </form>
          </div>
          <div class="flex w-9 flex-col">
            <div class="flex h-[74px] items-center justify-end pr-[2px]"><svg class="size-[27px]" viewBox="0 0 27 27" fill="none" stroke-width="6"><circle cx="13.500" cy="13.500" r="12.500" stroke="#000" stroke-width="2"/><path d="M13.500 4A9.500 9.500 0 0 1 22 9" stroke="#f84020"/><path d="M22 9A9.500 9.500 0 0 1 22 18" stroke="#f8e020"/><path d="M22 18A9.500 9.500 0 0 1 13.500 23" stroke="#50e840"/><path d="M13.500 23A9.500 9.500 0 0 1 5 18" stroke="#40d8f0"/><path d="M5 18A9.500 9.500 0 0 1 5 9" stroke="#3840e8"/><path d="M5 9A9.500 9.500 0 0 1 13.500 4" stroke="#e030c8"/></svg></div>
            <div class="flex flex-1 flex-col items-end gap-[42px] rounded-tl-lg bg-[#d8d9dd] pr-px pt-[21px]">
              <svg class="h-[30px] w-[30px]" viewBox="0 0 30 30"><path d="M1 2H29V24H1z" fill="url(#gray)" stroke="#111" stroke-width="3"/><path d="M10 29H20V24H10z" fill="#111"/></svg>
              <svg class="h-[30px] w-[30px]" viewBox="0 0 30 30"><path d="M1 1H29V29H1z" fill="#eef" stroke="#222" stroke-width="2"/><path d="M2 2H28V6H2z" fill="#3844a8"/><path d="M3 20Q5 8 15 8Q25 8 27 20L26 27H4z" fill="#3a50c8"/><text x="15" y="25" text-anchor="middle" font-size="19" font-weight="bold" font-family="Liberation Serif" fill="#fff">?</text></svg>
            </div>
          </div>
        </div>
      </div>

      <div class="flex min-h-0 flex-1 flex-col overflow-hidden rounded-tl-lg bg-[#ececec] pb-[10px]">
        <div class="flex h-[42px] shrink-0 items-center justify-between border-b-2 border-[#d8d9dd] pb-[2px] pl-[9px] pr-1"><h2 class="text-[24px] text-[#8c8c8c]">Layers</h2><svg class="size-6" viewBox="0 0 24 24"><use href="#gear"/></svg></div>
        <div class="flex h-[72px] shrink-0 items-center pl-4 pt-[5px] [&>svg]:size-11 [&_*]:[vector-effect:non-scaling-stroke]">
          <svg viewBox="56 200 119 132" preserveAspectRatio="none"><path d="M80 227L148 236L144 270L112 306L80 270z" fill="#ee7a50" stroke="#111" stroke-width="3"/><path d="M80 240L112 280V304L84 276z" fill="#fff"/><path d="M82 262L110 292V306L84 280z" fill="#4458c8"/><path d="M106 262H154V310H106z" fill="#fff"/><path d="M112 282H148M130 264V300" stroke="#000" stroke-width="5"/></svg>
          <svg viewBox="175 200 119 132" preserveAspectRatio="none" fill="#ddd" stroke="#a4a4a4" stroke-width="2"><path d="M196 224L235 234L232 258L210 268L196 252zM234 256L270 266L268 292L246 304L230 288z"/><path d="M202 270V297H220M214 288L226 297L214 306" fill="none"/></svg>
          <svg viewBox="293 200 119 132" preserveAspectRatio="none" fill="none"><path d="M318 228L385 302M385 228L318 302" stroke="#a4a4a4" stroke-width="6"/><path d="M318 228L385 302M385 228L318 302" stroke="#ddd" stroke-width="3"/></svg>
          <svg viewBox="412 200 119 132" preserveAspectRatio="none" fill="#ddd" stroke="#a4a4a4" stroke-width="2"><path d="M484 236Q460 212 440 236Q424 270 446 296M486 226V242H470" fill="none"/><path d="M450 242L508 254L504 292L476 306L450 286z"/></svg>
          <svg viewBox="531 200 119 132" preserveAspectRatio="none" fill="#d8d8d8" stroke="#a4a4a4" stroke-width="2"><path d="M589 234L624 278Q624 282 620 282H558Q554 282 554 278z"/></svg>
          <svg viewBox="650 200 119 132" preserveAspectRatio="none" fill="#d8d8d8" stroke="#a4a4a4" stroke-width="2"><path d="M708 290L743 246Q743 242 739 242H677Q673 242 673 246z"/></svg>
          <svg viewBox="769 200 119 132" preserveAspectRatio="none" fill="#d8d8d8" stroke="#a4a4a4" stroke-width="2"><path d="M803 264L844 224H848V304H844z"/></svg>
          <svg viewBox="888 200 119 132" preserveAspectRatio="none"><path d="M912 226Q946 218 980 226L955 264V302L946 308L937 302V264z" fill="url(#blue)" stroke="#10184c" stroke-width="3"/></svg>
          <svg viewBox="1006 200 119 132" preserveAspectRatio="none" fill="none"><path d="M1034 221H1095V307H1034zM1054 236V307M1075 236V307M1034 258H1095M1034 282H1095" stroke="#444" stroke-width="1.500"/><path d="M1033 220H1096V236H1033z" fill="#444"/></svg>
          <svg viewBox="1125 200 119 132" preserveAspectRatio="none"><path d="M1152 234H1217M1152 264H1217M1152 294H1217" stroke="#d9d9d9" stroke-width="4"/></svg>
          <svg viewBox="0 0 44 44"><circle cx="22" cy="21" r="15" fill="url(#help)"/><text x="22" y="31" text-anchor="middle" font-size="28" font-weight="bold" font-family="Liberation Serif" fill="#fff">?</text></svg>
        </div>
        <div class="ml-[18px] mr-[13px] flex h-[42px] shrink-0 items-center rounded-lg border border-[#d0d0d0] border-b-[#aaa] bg-white pl-[13px] pr-3">
          <svg class="size-[26px]" viewBox="0 0 26 26" fill="none" stroke="#222" stroke-width="2"><circle cx="11" cy="11" r="9.500"/><path d="M17.500 18L25 25"/></svg>
          <input aria-label="Search" placeholder="Search" class="ml-[14px] flex-1 pt-[2px] text-[24px] placeholder:text-[#bcbcbc]">
        </div>
        <div class="ml-4 mr-3 mt-[11px] min-h-0 flex-1 overflow-hidden bg-white text-[22px]">
          <table class="w-[640px] table-fixed [&_th]:h-14 [&_th]:border-b-2 [&_th]:border-[#e2e2e2] [&_th]:p-0 [&_th]:text-left [&_th]:font-normal [&_th>div]:flex [&_th>div]:h-8 [&_th>div]:items-center [&_td]:h-[54px] [&_td]:p-0">
            <thead><tr><th class="w-[191px]"><div class="pl-[54px]">Layer</div></th><th class="w-10"><div class="border-l-2 border-[#e2e2e2]"></div></th><th class="w-10"><div class="border-l-2 border-[#e2e2e2]"></div></th><th class="w-10"><div class="border-l-2 border-[#e2e2e2]"></div></th><th class="w-10"><div class="border-l-2 border-[#e2e2e2]"></div></th><th class="w-40"><div class="border-l-2 border-[#e2e2e2] pl-1">Material</div></th><th><div class="border-l-2 border-[#e2e2e2] pl-1">Linetype</div></th></tr></thead>
            <tbody><tr class="font-bold"><td class="!pl-[54px]">Default</td><td><svg class="ml-2 h-6 w-7" viewBox="0 0 28 24"><path d="M2 13l8 8L26 3" fill="none" stroke="#222" stroke-width="3"/></svg></td><td></td><td></td><td><div class="ml-[7px] size-[26px] bg-black"></div></td><td><div class="ml-[3px] size-8 rounded-full border-2 border-[#888]"></div></td><td class="!pl-[6px]">Continuous</td></tr></tbody>
          </table>
        </div>
      </div>
    </div>
  </div>
  <div class="mt-[6px] flex h-[26px] shrink-0 items-start overflow-hidden bg-[#ececec] text-[22px] leading-[34px]">
    <div class="mt-2 flex w-[26px] flex-col items-center gap-[6px] [&>i]:size-[6px] [&>i]:rounded-full [&>i]:border-2 [&>i]:border-[#a8a8a8]"><i></i><i></i></div>
    <p class="ml-[26px] whitespace-nowrap">Successfully read file "/Users/preciousaghaeze/Downloads/CellPhoneStand_Simple_2024.gh"</p>
  </div>
</section>
</div>

<script>
// Perspective construction plane: both line families converge to their vanishing points.
(function () {
  const far = [1755, 840], left = [-3774, 870];
  const out = { major: '', minor: '' };
  const at = (p, v, s) => [v[0] + (p[0] - v[0]) * s, v[1] + (p[1] - v[1]) * s];
  const seg = (a, b) => 'M' + a.map(n => n.toFixed(1)) + 'L' + b.map(n => n.toFixed(1));
  const front = [418, 1381];
  const k0 = 1 / (418 - left[0]);
  for (let i = -60; i <= 120; i++) {
    const x = left[0] + 1 / (k0 - i * 0.0000007);
    const p = [x, 1333 + 0.122 * (x - 20)];
    if (x < -1500 || x > 5000) continue;
    out[i % 5 ? 'minor' : 'major'] += seg(p, at(p, far, 0.3));
  }
  for (let i = 0; i <= 140; i++) {
    const s = 1 / (1 + i * 0.0061);
    const p = at(front, far, s);
    if (s < 0.53) break;
    out[i % 5 ? 'minor' : 'major'] += seg(at(p, left, 0.7), at(p, left, 1.6));
  }
  document.getElementById('major').setAttribute('d', out.major);
  document.getElementById('minor').setAttribute('d', out.minor);
})();
</script>
</body>
</html>
